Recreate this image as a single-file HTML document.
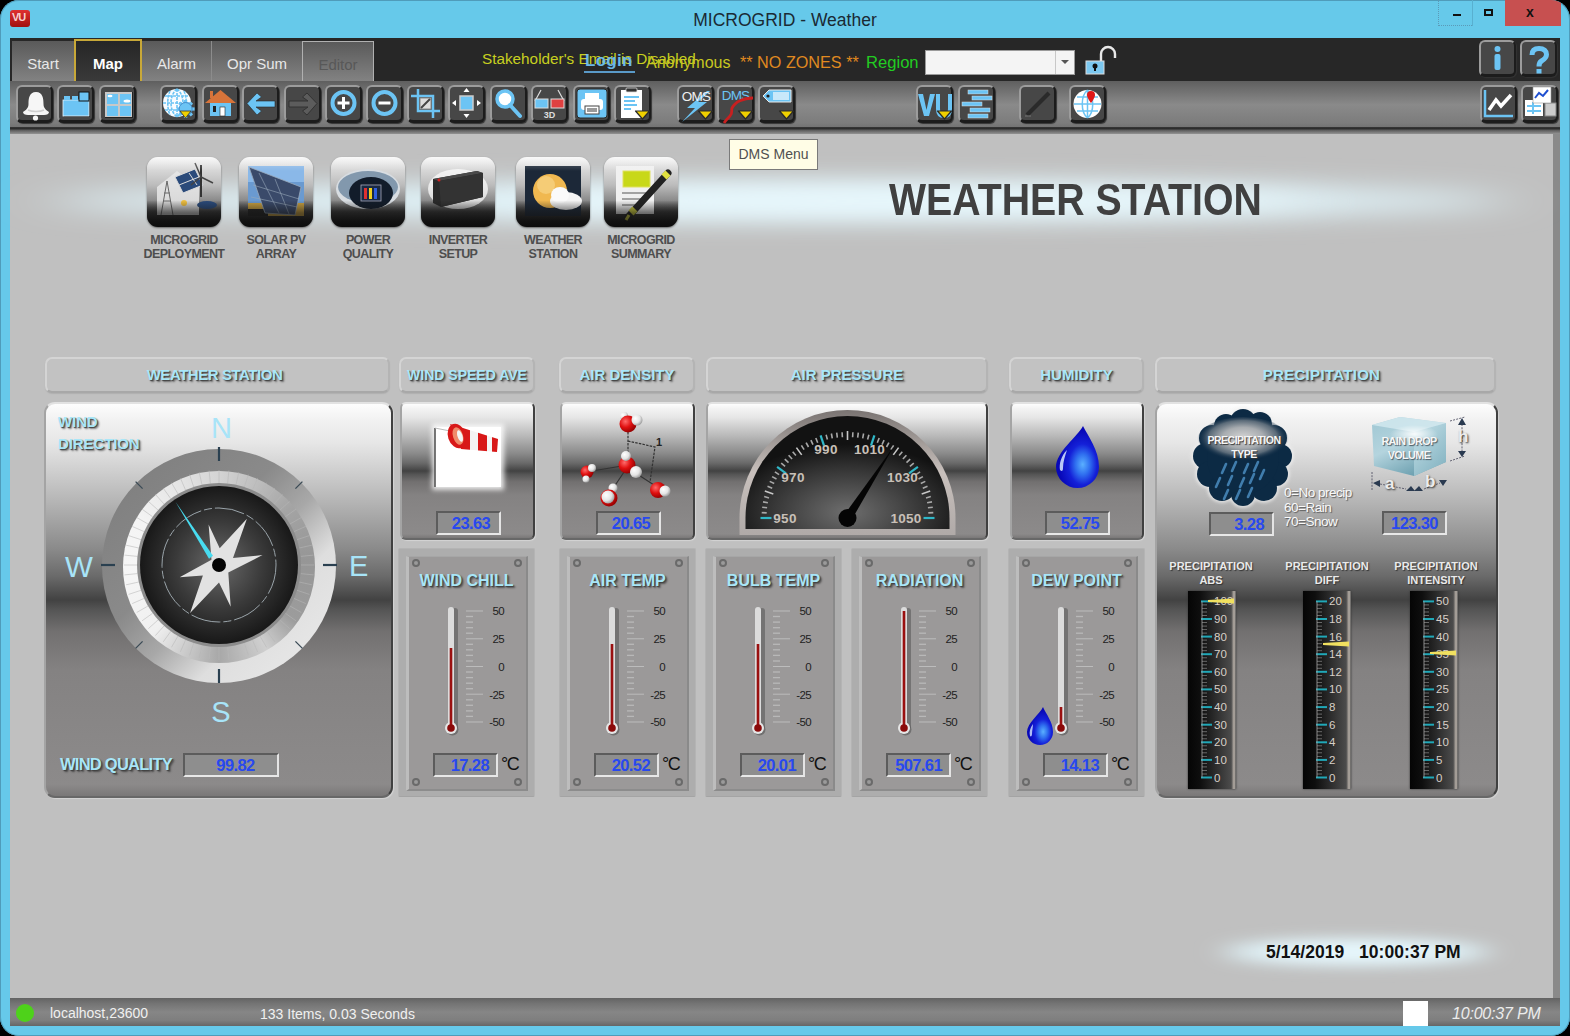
<!DOCTYPE html>
<html><head><meta charset="utf-8">
<style>
*{margin:0;padding:0;box-sizing:border-box}
html,body{width:1570px;height:1036px;overflow:hidden;background:#000;font-family:"Liberation Sans",sans-serif}
.a{position:absolute}
svg{overflow:visible}
#win{position:absolute;left:0;top:0;width:1570px;height:1036px;background:#66c9ea;border-radius:19px;overflow:hidden;box-shadow:inset 0 0 0 1px #4f9cba}
#title{left:0;top:10px;width:1570px;text-align:center;font-size:17.5px;color:#1a2a34}
.wb{top:0;height:26px}
#hdr{left:10px;top:38px;width:1550px;height:43px;background:#272727}
#tb{left:10px;top:81px;width:1550px;height:53px;background:linear-gradient(#5f5f5f,#8a8a8a 45%,#7c7c7c 79%,#747474 86%,#2a2a2a 88%,#2e2e2e 90.5%,#5a5a5a 92.5%,#939393)}
#content{left:10px;top:134px;width:1543px;height:864px;background:#c0c0c0}
#rstrip{left:1553px;top:134px;width:7px;height:864px;background:#8a8a8a}
#status{left:10px;top:998px;width:1550px;height:28px;background:linear-gradient(#636363,#747474 20%,#868686 50%,#7e7e7e 80%,#666)}
.tab{top:41px;height:40px;color:#e8e8e8;font-size:15px;text-align:center;line-height:45px;background:linear-gradient(#5a5a5a,#828282);}
.tbtn{border-radius:6px;background:#474747;border-top:2px solid #9c9c9c;border-left:2px solid #9c9c9c;border-right:2px solid #1c1c1c;border-bottom:3px solid #1c1c1c;box-shadow:1px 1px 1px #333}

.ph{border-radius:7px;background:#c2c2c2;border:2px solid #d4d4d4;border-right-color:#b4b4b4;border-bottom-color:#a8a8a8;box-shadow:0 1px 1px #b0b0b0}
.lbl{color:#a8e6f8;font-weight:bold;text-shadow:1px 1px 1px #404040, 2px 2px 2px rgba(0,0,0,.45);white-space:nowrap}
.mb{border-radius:6px;background:linear-gradient(#fdfdfd 0%,#f2f2f2 4%,#e6e6e6 10%,#b8b8b8 24%,#8a8a8a 37%,#6a6a6a 44%,#424242 50%,#555 52.5%,#727070 58%,#848282 68%,#8a8888 88%,#8c8a8a 97%,#7a7878 100%);border:2px solid #e2e2e2;border-left-color:#a4a4a4;border-bottom-color:#686868;border-right-color:#404040;box-shadow:1px 1px 1px #d4d4d4}
.vb{background:#8e8e8e;border:2px solid #5c5c5c;border-right-color:#e4e4e4;border-bottom-color:#e8e8e8;color:#2848f0;font-size:16.5px;letter-spacing:-0.6px;font-weight:bold;text-align:center;line-height:20px}
.tp{background:#adadad;border-radius:2px;border:1px solid #b4b4b4;border-bottom-color:#a4a4a4}
.tpi{background:#9b9999;border-left:3px solid #bdbdbd;border-top:1px solid #a6a6a6;border-right:2px solid #8a8a8a;border-bottom:2px solid #8c8c8c}
.scr{width:8px;height:8px;border-radius:50%;background:#9a9a9a;border:2px solid #6a6a6a}
.deg{color:#111;font-size:18px;letter-spacing:-1.5px}

</style></head><body>
<div id="win">
  <div class="a" id="tb"></div>
  <div class="a" id="content"></div>
  <div class="a" id="rstrip"></div>
  <div class="a" id="status"></div>
  <!-- title bar -->
  <div class="a" style="left:10px;top:10px;width:20px;height:17px;border-radius:3px;background:linear-gradient(#e03030,#a01010);"></div>
  <div class="a" style="left:12px;top:11px;font-size:11px;font-weight:bold;color:#f8d0d0;letter-spacing:-1px">VU</div>
  <div class="a" id="title">MICROGRID - Weather</div>
  <div class="a wb" style="left:1438px;width:34px;border-left:1px dotted #5a9ab8;border-bottom:1px dotted #5a9ab8"></div>
  <div class="a wb" style="left:1472px;width:34px;border-left:1px solid #58b0d0"></div>
  <div class="a" style="left:1453px;top:14px;width:8px;height:2px;background:#111"></div>
  <div class="a" style="left:1484px;top:9px;width:9px;height:7px;border:2px solid #111"></div>
  <div class="a wb" style="left:1505px;width:56px;background:#c75050"></div>
  <div class="a" style="left:1526px;top:4px;font-size:14px;color:#111;font-weight:bold">x</div>
  <!-- header -->
  <div class="a" id="hdr"></div>
  <div class="a tab" style="left:12px;width:62px">Start</div>
  <div class="a tab" style="left:74px;width:68px;background:#2e2e2e;border:2px solid #c8a838;border-bottom:none;top:39px;height:42px;line-height:46px;font-weight:bold;color:#fff;background:linear-gradient(#262626,#3a3a3a)">Map</div>
  <div class="a tab" style="left:142px;width:69px">Alarm</div>
  <div class="a tab" style="left:211px;width:91px;border-left:1px solid #8c8c8c">Opr Sum</div>
  <div class="a tab" style="left:302px;width:72px;border:1px solid #b0b0b0;border-bottom:none;color:#585858">Editor</div>
  <div class="a" style="left:482px;top:50px;font-size:15.3px;color:#c8d020;white-space:nowrap">Stakeholder's Email is Disabled</div>
  <div class="a" style="left:585px;top:51px;font-size:17px;font-weight:bold;color:#6ab8e8;white-space:nowrap;letter-spacing:0.3px">Login</div><div class="a" style="left:584px;top:71px;width:51px;height:2px;background:#5a9ac8"></div>
  <div class="a" style="left:646px;top:54px;font-size:16px;color:#c8c820;white-space:nowrap">Anonymous</div>
  <div class="a" style="left:740px;top:53px;font-size:16.2px;color:#e08a20;white-space:nowrap">** NO ZONES **</div>
  <div class="a" style="left:866px;top:53px;font-size:16.6px;color:#22cc22;white-space:nowrap">Region</div>
  <div class="a" style="left:925px;top:50px;width:150px;height:25px;background:#f4f4f4;border:1px solid #9a9a9a"></div>
  <div class="a" style="left:1055px;top:51px;width:1px;height:23px;background:#c8c8c8"></div>
  <div class="a" style="left:1061px;top:60px;width:0;height:0;border-left:4px solid transparent;border-right:4px solid transparent;border-top:4px solid #555"></div>
  <svg class="a" style="left:1084px;top:44px" width="34" height="32" viewBox="0 0 34 32">
    <path d="M17 18 V10 a7 7 0 0 1 14 0 V14" fill="none" stroke="#e8e8e8" stroke-width="2.4"/>
    <rect x="2" y="17" width="18" height="13" fill="#7cc8f0" stroke="#ddd" stroke-width="1"/>
    <circle cx="11" cy="22" r="2.5" fill="#111"/><rect x="10" y="22" width="2" height="5" fill="#111"/>
  </svg>
<div class="a tbtn" style="left:16px;top:85px;width:37px;height:38px"><svg width="37" height="38" viewBox="0 0 37 38" style="position:absolute;left:-2px;top:-2px"><path d="M20 7 C13 7 12.5 14 12.5 19 C12.5 23 10 25 7 27 C7 29 9 30 12 30 L28 30 C31 30 33 29 33 27 C30 25 27.5 23 27.5 19 C27.5 14 27 7 20 7 Z" fill="#f6f6f6"/><path d="M12 25 C16 27 24 27 28 25" stroke="#d0d0d0" stroke-width="1.5" fill="none"/><circle cx="19.5" cy="33" r="2.6" fill="#f6f6f6"/></svg></div>
<div class="a tbtn" style="left:57px;top:85px;width:37px;height:38px"><svg width="37" height="38" viewBox="0 0 37 38" style="position:absolute;left:-2px;top:-2px"><rect x="7" y="16" width="26" height="16" fill="#111" opacity=".9"/><rect x="6" y="15" width="26" height="16" fill="#6cc4f4" stroke="#e8f4fc" stroke-width=".8"/><rect x="22" y="7" width="10" height="9" fill="#6cc4f4" stroke="#111" stroke-width="1"/><rect x="7" y="11" width="6" height="4" fill="#6cc4f4"/><rect x="15" y="11" width="6" height="4" fill="#6cc4f4"/></svg></div>
<div class="a tbtn" style="left:99px;top:85px;width:37px;height:38px"><svg width="37" height="38" viewBox="0 0 37 38" style="position:absolute;left:-2px;top:-2px"><rect x="6" y="7" width="28" height="26" fill="#222"/><rect x="6" y="7" width="27" height="25" fill="#c8c8c8"/><rect x="8" y="9" width="11" height="10" fill="#6cc4f4"/><rect x="21" y="9" width="11" height="10" fill="#6cc4f4"/><rect x="8" y="21" width="11" height="10" fill="#6cc4f4"/><rect x="21" y="21" width="11" height="10" fill="#6cc4f4"/><ellipse cx="11" cy="11" rx="2.5" ry="1.3" fill="#fff"/><ellipse cx="28" cy="16" rx="3.5" ry="1.6" fill="#fff"/></svg></div>
<div class="a tbtn" style="left:160px;top:85px;width:37px;height:38px"><svg width="37" height="38" viewBox="0 0 37 38" style="position:absolute;left:-2px;top:-2px"><circle cx="17" cy="18" r="14" fill="#f8fbfe"/><path d="M3 18h28M17 4v28M5 11h24M5 25h24M17 4c-8 6-8 22 0 28M17 4c8 6 8 22 0 28M10 6c-3 7-3 17 0 24M24 6c3 7 3 17 0 24" stroke="#6cc4f4" stroke-width="1.6" fill="none" stroke-dasharray="3 1"/><rect x="24" y="15" width="3.2" height="4" fill="#6cc4f4" transform="rotate(0 25.6 24)"/><rect x="24" y="15" width="3.2" height="4" fill="#6cc4f4" transform="rotate(45 25.6 24)"/><rect x="24" y="15" width="3.2" height="4" fill="#6cc4f4" transform="rotate(90 25.6 24)"/><rect x="24" y="15" width="3.2" height="4" fill="#6cc4f4" transform="rotate(135 25.6 24)"/><rect x="24" y="15" width="3.2" height="4" fill="#6cc4f4" transform="rotate(180 25.6 24)"/><rect x="24" y="15" width="3.2" height="4" fill="#6cc4f4" transform="rotate(225 25.6 24)"/><rect x="24" y="15" width="3.2" height="4" fill="#6cc4f4" transform="rotate(270 25.6 24)"/><rect x="24" y="15" width="3.2" height="4" fill="#6cc4f4" transform="rotate(315 25.6 24)"/><circle cx="25.6" cy="24" r="6.5" fill="#6cc4f4" stroke="#3a80c0" stroke-width=".8"/><path d="M20 26h11l-5.5 7z" fill="#f0d000" stroke="#333" stroke-width=".8"/></svg></div>
<div class="a tbtn" style="left:202px;top:85px;width:37px;height:38px"><svg width="37" height="38" viewBox="0 0 37 38" style="position:absolute;left:-2px;top:-2px"><path d="M3 18 L18.5 5 L34 18z" fill="#d8743a"/><rect x="8" y="6" width="3" height="7" fill="#d8743a"/><rect x="8" y="18" width="21" height="13" fill="#6cc4f4"/><rect x="18" y="22" width="5" height="9" fill="#fff" stroke="#222" stroke-width=".6"/><rect x="11" y="21" width="3" height="6" fill="#222"/></svg></div>
<div class="a tbtn" style="left:242px;top:85px;width:37px;height:38px"><svg width="37" height="38" viewBox="0 0 37 38" style="position:absolute;left:-2px;top:-2px"><path d="M5 18.5 L15 8 L19.5 12 L14 16 L33 16 L33 22 L14 22 L19.5 26 L15 30 Z" fill="#6cc4f4" stroke="#2a2a2a" stroke-width=".6"/></svg></div>
<div class="a tbtn" style="left:284px;top:85px;width:37px;height:38px"><svg width="37" height="38" viewBox="0 0 37 38" style="position:absolute;left:-2px;top:-2px"><path d="M33 18.5 L23 8 L18.5 12 L24 16 L5 16 L5 22 L24 22 L18.5 26 L23 30 Z" fill="#5c5c5c" stroke="#333" stroke-width="1"/></svg></div>
<div class="a tbtn" style="left:325px;top:85px;width:37px;height:38px"><svg width="37" height="38" viewBox="0 0 37 38" style="position:absolute;left:-2px;top:-2px"><circle cx="18.5" cy="18" r="11" fill="none" stroke="#6cc4f4" stroke-width="4"/><path d="M18.5 12v12M12.5 18h12" stroke="#fff" stroke-width="3"/></svg></div>
<div class="a tbtn" style="left:366px;top:85px;width:37px;height:38px"><svg width="37" height="38" viewBox="0 0 37 38" style="position:absolute;left:-2px;top:-2px"><circle cx="18.5" cy="18" r="11" fill="none" stroke="#6cc4f4" stroke-width="4"/><path d="M12.5 18h12" stroke="#fff" stroke-width="3"/></svg></div>
<div class="a tbtn" style="left:407px;top:85px;width:37px;height:38px"><svg width="37" height="38" viewBox="0 0 37 38" style="position:absolute;left:-2px;top:-2px"><path d="M11 4v22h22M4 11h22v22" stroke="#6cc4f4" stroke-width="2.5" fill="none"/><rect x="13" y="13" width="11" height="11" fill="#ddd" stroke="#888"/><path d="M14 23 L23 14" stroke="#444" stroke-width="2"/></svg></div>
<div class="a tbtn" style="left:448px;top:85px;width:37px;height:38px"><svg width="37" height="38" viewBox="0 0 37 38" style="position:absolute;left:-2px;top:-2px"><rect x="12" y="11" width="13" height="14" fill="#6cc4f4" stroke="#ccc" stroke-width="1.5"/><path d="M18.5 3l-3 4h6z M18.5 33l-3-4h6z M4 18l4-3v6z M33 18l-4-3v6z" fill="#fff"/></svg></div>
<div class="a tbtn" style="left:490px;top:85px;width:37px;height:38px"><svg width="37" height="38" viewBox="0 0 37 38" style="position:absolute;left:-2px;top:-2px"><circle cx="15" cy="14" r="8" fill="#fff" stroke="#6cc4f4" stroke-width="3.5"/><path d="M20 20 L30 31" stroke="#6cc4f4" stroke-width="4" stroke-linecap="round"/></svg></div>
<div class="a tbtn" style="left:531px;top:85px;width:37px;height:38px"><svg width="37" height="38" viewBox="0 0 37 38" style="position:absolute;left:-2px;top:-2px"><path d="M4 16 L10 5 M33 16 L27 5" stroke="#ddd" stroke-width="1.2"/><rect x="4" y="14" width="13" height="9" fill="#6cc4f4" stroke="#ddd"/><rect x="20" y="14" width="13" height="9" fill="#e04040" stroke="#ddd"/><text x="18.5" y="33" font-size="9" font-weight="bold" fill="#ddd" text-anchor="middle" font-family="Liberation Sans">3D</text></svg></div>
<div class="a tbtn" style="left:573px;top:85px;width:37px;height:38px"><svg width="37" height="38" viewBox="0 0 37 38" style="position:absolute;left:-2px;top:-2px"><rect x="4" y="4" width="30" height="29" rx="3" fill="#6cc4f4" stroke="#2a2a2a" stroke-width="1"/><rect x="8" y="14" width="22" height="11" rx="3" fill="#fff"/><rect x="12" y="8" width="14" height="6" fill="#fff"/><rect x="12" y="21" width="14" height="8" fill="#fff" stroke="#444" stroke-width="1"/><rect x="14" y="23" width="10" height="4" fill="#999"/></svg></div>
<div class="a tbtn" style="left:614px;top:85px;width:37px;height:38px"><svg width="37" height="38" viewBox="0 0 37 38" style="position:absolute;left:-2px;top:-2px"><rect x="7" y="5" width="21" height="28" fill="#fff"/><rect x="12" y="3" width="11" height="4" rx="1" fill="#333" stroke="#ddd" stroke-width=".8"/><path d="M10 12h15M10 16h11M10 20h13M10 24h7" stroke="#6cc4f4" stroke-width="2"/><path d="M21.5 26 h14 l-7 8 z" fill="#f0d000" stroke="#2a2a2a" stroke-width="1.2" stroke-linejoin="round"/></svg></div>
<div class="a tbtn" style="left:677px;top:85px;width:37px;height:38px"><svg width="37" height="38" viewBox="0 0 37 38" style="position:absolute;left:-2px;top:-2px"><path d="M30 6 L10 23 L18 23 L5 37 L30 17 L21 17 L33 6z" fill="#6cc4f4"/><text x="19" y="16" font-size="13.5" fill="#f0f0f0" text-anchor="middle" font-family="Liberation Sans" letter-spacing="-.8">OMS</text><path d="M21.5 26 h14 l-7 8 z" fill="#f0d000" stroke="#2a2a2a" stroke-width="1.2" stroke-linejoin="round"/></svg></div>
<div class="a tbtn" style="left:717px;top:85px;width:37px;height:38px"><svg width="37" height="38" viewBox="0 0 37 38" style="position:absolute;left:-2px;top:-2px"><text x="18.5" y="15" font-size="13.5" fill="#6cc4f4" text-anchor="middle" font-family="Liberation Sans" letter-spacing="-.8">DMS</text><path d="M36 13 C26 13 18 17 15 23 C14 26 16 28 13 31 C11 33 9 35 7 38" stroke="#c82020" stroke-width="2.8" fill="none"/><path d="M21.5 26 h14 l-7 8 z" fill="#f0d000" stroke="#2a2a2a" stroke-width="1.2" stroke-linejoin="round"/></svg></div>
<div class="a tbtn" style="left:758px;top:85px;width:37px;height:38px"><svg width="37" height="38" viewBox="0 0 37 38" style="position:absolute;left:-2px;top:-2px"><path d="M5 11 l6-6 h22 v12 h-22z" fill="#6cc4f4" stroke="#eaeaea" stroke-width="1"/><rect x="15" y="7" width="16" height="8" fill="#c8e8fa"/><circle cx="10" cy="11" r="1.6" fill="#222"/><path d="M21.5 26 h14 l-7 8 z" fill="#f0d000" stroke="#2a2a2a" stroke-width="1.2" stroke-linejoin="round"/></svg></div>
<div class="a tbtn" style="left:916px;top:85px;width:37px;height:38px"><svg width="37" height="38" viewBox="0 0 37 38" style="position:absolute;left:-2px;top:-2px"><path d="M2 9 H7 L10.5 25 L14 9 H19 L13 31 H8 Z" fill="#6cc4f4"/><path d="M22 9 V24 C22 29.5 24.5 31 28 31 C31.5 31 34 29.5 34 24 V9" stroke="#6cc4f4" stroke-width="4" fill="none"/><path d="M21.5 26 h14 l-7 8 z" fill="#f0d000" stroke="#2a2a2a" stroke-width="1.2" stroke-linejoin="round"/></svg></div>
<div class="a tbtn" style="left:958px;top:85px;width:37px;height:38px"><svg width="37" height="38" viewBox="0 0 37 38" style="position:absolute;left:-2px;top:-2px"><rect x="10" y="5" width="20" height="4" fill="#6cc4f4" stroke="#ddd" stroke-width=".5"/><rect x="14" y="11" width="20" height="4" fill="#6cc4f4" stroke="#ddd" stroke-width=".5"/><rect x="4" y="17" width="20" height="4" fill="#6cc4f4" stroke="#ddd" stroke-width=".5"/><rect x="12" y="23" width="20" height="4" fill="#6cc4f4" stroke="#ddd" stroke-width=".5"/><rect x="10" y="29" width="20" height="4" fill="#6cc4f4" stroke="#ddd" stroke-width=".5"/></svg></div>
<div class="a tbtn" style="left:1019px;top:85px;width:37px;height:38px"><svg width="37" height="38" viewBox="0 0 37 38" style="position:absolute;left:-2px;top:-2px"><path d="M8 30 L30 8" stroke="#2a2a2a" stroke-width="4"/><path d="M6 31h6" stroke="#777" stroke-width="1"/></svg></div>
<div class="a tbtn" style="left:1069px;top:85px;width:37px;height:38px"><svg width="37" height="38" viewBox="0 0 37 38" style="position:absolute;left:-2px;top:-2px"><circle cx="18.5" cy="19" r="14" fill="#fff"/><path d="M5 19h27M18.5 5v28M8 12h21M8 26h21M18.5 5c-7 6-7 22 0 28M18.5 5c7 6 7 22 0 28" stroke="#6cc4f4" stroke-width="1.5" fill="none"/><path d="M22 6 a4 4 0 0 1 4 4 c0 3 -4 8 -4 8 c0 0 -4 -5 -4 -8 a4 4 0 0 1 4 -4z" fill="#e01818"/></svg></div>
<div class="a tbtn" style="left:1480px;top:85px;width:37px;height:38px"><svg width="37" height="38" viewBox="0 0 37 38" style="position:absolute;left:-2px;top:-2px"><path d="M5 5 V31 H33" stroke="#6cc4f4" stroke-width="2.5" fill="none"/><path d="M9 25 L16 15 L21 21 L31 10" stroke="#fff" stroke-width="3.5" fill="none"/></svg></div>
<div class="a tbtn" style="left:1521px;top:85px;width:37px;height:38px"><svg width="37" height="38" viewBox="0 0 37 38" style="position:absolute;left:-2px;top:-2px"><rect x="4" y="15" width="18" height="16" fill="#fff"/><path d="M6 21h14M6 26h14M12 17v12" stroke="#6cc4f4" stroke-width="2"/><rect x="24" y="18" width="11" height="13" fill="#ccc" stroke="#888"/><rect x="12" y="2" width="18" height="16" fill="#fff" stroke="#999" stroke-width=".6"/><path d="M14 13 L18 8 L22 11 L27 5" stroke="#2050d0" stroke-width="2" fill="none"/></svg></div>
<div class="a tbtn" style="left:1479px;top:40px;width:37px;height:37px"><svg width="37" height="37" style="position:absolute;left:-2px;top:-2px"><circle cx="18.5" cy="9" r="3" fill="#6cc4f4"/><rect x="15.5" y="14" width="6" height="16" rx="2" fill="#6cc4f4"/></svg></div>
<div class="a tbtn" style="left:1520px;top:40px;width:37px;height:37px"><svg width="37" height="37" style="position:absolute;left:-2px;top:-2px"><path transform="translate(-2 0)" d="M14 15 C14 10 17 8.5 21 8.5 C26 8.5 28.5 11 28.5 14.5 C28.5 18 26 19.5 23.5 21 C21.5 22.2 21 23.5 21 26.5" stroke="#6cc4f4" stroke-width="5" fill="none" stroke-linecap="butt"/><rect x="16.5" y="29" width="5" height="4.5" fill="#6cc4f4"/></svg></div>
<svg class="a" style="left:0;top:130px" width="1560" height="150"><defs><filter id="gb" x="-20%" y="-200%" width="140%" height="500%"><feGaussianBlur stdDeviation="30 13"/></filter></defs><ellipse cx="780" cy="71" rx="730" ry="18" fill="#e2f6fc" filter="url(#gb)"/><ellipse cx="900" cy="71" rx="420" ry="12" fill="#eaf9fe" filter="url(#gb)"/></svg>
<div class="a" style="left:147px;top:157px;width:74px;height:70px;border-radius:11px;background:linear-gradient(#f6f6f6,#e0e0e0 12%,#bcbcbc 40%,#8a8a8a 62%,#3a3a3a 78%,#1a1a1a 92%,#141414);box-shadow:0 1px 2px #666"></div>
<svg class="a" style="left:147px;top:157px" width="74" height="70"><path d="M10 30 L30 14 L52 30 L52 58 L10 58Z" fill="#e8e8e8" opacity=".85"/><path d="M28 20 L48 12 L56 28 L36 36Z" fill="#2a4a7a" stroke="#ddd" stroke-width="1"/><path d="M42 16 L50 28 M32 28 L52 20" stroke="#ddd" stroke-width="1"/><line x1="54" y1="8" x2="54" y2="40" stroke="#333" stroke-width="2"/><path d="M54 20 L48 6 M54 20 L66 26 M54 20 L44 28" stroke="#444" stroke-width="1.5"/><path d="M14 58 L20 24 L26 58 M16 44 L24 44 M17 36 L23 36" stroke="#666" stroke-width="1" fill="none"/><ellipse cx="60" cy="48" rx="10" ry="4" fill="#2a4a7a"/><circle cx="37" cy="46" r="3" fill="#f0c040"/></svg>
<div class="a" style="left:147px;top:157px;width:74px;height:70px;border-radius:11px;background:linear-gradient(rgba(255,255,255,.35),rgba(255,255,255,0) 20%,rgba(20,20,20,0) 62%,rgba(20,20,20,.6) 80%,rgba(10,10,10,.75));"></div>
<div class="a" style="left:127px;top:234px;width:114px;text-align:center;font-size:12.5px;line-height:13.5px;font-weight:bold;color:#4e4e4e;letter-spacing:-0.6px">MICROGRID<br>DEPLOYMENT</div>
<div class="a" style="left:239px;top:157px;width:74px;height:70px;border-radius:11px;background:linear-gradient(#f6f6f6,#e0e0e0 12%,#bcbcbc 40%,#8a8a8a 62%,#3a3a3a 78%,#1a1a1a 92%,#141414);box-shadow:0 1px 2px #666"></div>
<svg class="a" style="left:239px;top:157px" width="74" height="70"><rect x="9" y="9" width="56" height="50" fill="#6a9ad0"/><rect x="9" y="9" width="56" height="16" fill="#8ab8e8"/><rect x="9" y="46" width="56" height="13" fill="#c8a040"/><rect x="9" y="52" width="20" height="7" fill="#222"/><path d="M10 10 L62 30 L56 58 L26 56 Z" fill="#3a4a6a" stroke="#9ab" stroke-width=".8"/><path d="M20 16 L40 56 M36 22 L50 57 M14 28 L60 42 M12 40 L58 50" stroke="#9ab" stroke-width=".6"/></svg>
<div class="a" style="left:239px;top:157px;width:74px;height:70px;border-radius:11px;background:linear-gradient(rgba(255,255,255,.35),rgba(255,255,255,0) 20%,rgba(20,20,20,0) 62%,rgba(20,20,20,.6) 80%,rgba(10,10,10,.75));"></div>
<div class="a" style="left:219px;top:234px;width:114px;text-align:center;font-size:12.5px;line-height:13.5px;font-weight:bold;color:#4e4e4e;letter-spacing:-0.6px">SOLAR PV<br>ARRAY</div>
<div class="a" style="left:331px;top:157px;width:74px;height:70px;border-radius:11px;background:linear-gradient(#f6f6f6,#e0e0e0 12%,#bcbcbc 40%,#8a8a8a 62%,#3a3a3a 78%,#1a1a1a 92%,#141414);box-shadow:0 1px 2px #666"></div>
<svg class="a" style="left:331px;top:157px" width="74" height="70"><ellipse cx="37" cy="32" rx="32" ry="20" fill="#d8dde2"/><ellipse cx="37" cy="30" rx="30" ry="16" fill="#4a6a8a" opacity=".6"/><ellipse cx="40" cy="36" rx="22" ry="16" fill="#121c2a"/><rect x="30" y="28" width="20" height="16" fill="#1a2a44" stroke="#aab" stroke-width=".8"/><rect x="33" y="31" width="3" height="11" fill="#e03030"/><rect x="38" y="31" width="3" height="11" fill="#f0d020"/><rect x="43" y="31" width="3" height="11" fill="#3060e0"/></svg>
<div class="a" style="left:331px;top:157px;width:74px;height:70px;border-radius:11px;background:linear-gradient(rgba(255,255,255,.35),rgba(255,255,255,0) 20%,rgba(20,20,20,0) 62%,rgba(20,20,20,.6) 80%,rgba(10,10,10,.75));"></div>
<div class="a" style="left:311px;top:234px;width:114px;text-align:center;font-size:12.5px;line-height:13.5px;font-weight:bold;color:#4e4e4e;letter-spacing:-0.6px">POWER<br>QUALITY</div>
<div class="a" style="left:421px;top:157px;width:74px;height:70px;border-radius:11px;background:linear-gradient(#f6f6f6,#e0e0e0 12%,#bcbcbc 40%,#8a8a8a 62%,#3a3a3a 78%,#1a1a1a 92%,#141414);box-shadow:0 1px 2px #666"></div>
<svg class="a" style="left:421px;top:157px" width="74" height="70"><ellipse cx="37" cy="32" rx="30" ry="20" fill="#fff" opacity=".7"/><path d="M12 22 L56 14 L62 16 L62 40 L20 50 L12 46Z" fill="#2a2a2a"/><path d="M12 22 L56 14 L62 16 L18 24Z" fill="#4a4a4a"/><path d="M18 24 L62 16 L62 40 L20 50Z" fill="#333"/><circle cx="18" cy="23" r="1.5" fill="#d02020"/></svg>
<div class="a" style="left:421px;top:157px;width:74px;height:70px;border-radius:11px;background:linear-gradient(rgba(255,255,255,.35),rgba(255,255,255,0) 20%,rgba(20,20,20,0) 62%,rgba(20,20,20,.6) 80%,rgba(10,10,10,.75));"></div>
<div class="a" style="left:401px;top:234px;width:114px;text-align:center;font-size:12.5px;line-height:13.5px;font-weight:bold;color:#4e4e4e;letter-spacing:-0.6px">INVERTER<br>SETUP</div>
<div class="a" style="left:516px;top:157px;width:74px;height:70px;border-radius:11px;background:linear-gradient(#f6f6f6,#e0e0e0 12%,#bcbcbc 40%,#8a8a8a 62%,#3a3a3a 78%,#1a1a1a 92%,#141414);box-shadow:0 1px 2px #666"></div>
<svg class="a" style="left:516px;top:157px" width="74" height="70"><rect x="9" y="9" width="56" height="50" fill="#1c2838"/><circle cx="34" cy="34" r="17" fill="#f0b850"/><circle cx="30" cy="28" r="9" fill="#f8d890" opacity=".6"/><ellipse cx="50" cy="44" rx="16" ry="9" fill="#f4f4f4"/><ellipse cx="44" cy="38" rx="9" ry="8" fill="#fafafa"/></svg>
<div class="a" style="left:516px;top:157px;width:74px;height:70px;border-radius:11px;background:linear-gradient(rgba(255,255,255,.35),rgba(255,255,255,0) 20%,rgba(20,20,20,0) 62%,rgba(20,20,20,.6) 80%,rgba(10,10,10,.75));"></div>
<div class="a" style="left:496px;top:234px;width:114px;text-align:center;font-size:12.5px;line-height:13.5px;font-weight:bold;color:#4e4e4e;letter-spacing:-0.6px">WEATHER<br>STATION</div>
<div class="a" style="left:604px;top:157px;width:74px;height:70px;border-radius:11px;background:linear-gradient(#f6f6f6,#e0e0e0 12%,#bcbcbc 40%,#8a8a8a 62%,#3a3a3a 78%,#1a1a1a 92%,#141414);box-shadow:0 1px 2px #666"></div>
<svg class="a" style="left:604px;top:157px" width="74" height="70"><rect x="12" y="9" width="38" height="48" fill="#f0f0f0"/><rect x="19" y="14" width="27" height="16" fill="#c8d818" stroke="#e0e060" stroke-width="1"/><path d="M18 36h26M18 42h26M18 48h20" stroke="#888" stroke-width="1.5"/><path d="M64 16 L24 60" stroke="#222" stroke-width="7" stroke-linecap="round"/><path d="M64 16 L60 20" stroke="#e0e040" stroke-width="7"/><path d="M31 52 L27 56" stroke="#d8d840" stroke-width="7"/><path d="M25 58 L22 63" stroke="#e0e040" stroke-width="3"/></svg>
<div class="a" style="left:604px;top:157px;width:74px;height:70px;border-radius:11px;background:linear-gradient(rgba(255,255,255,.35),rgba(255,255,255,0) 20%,rgba(20,20,20,0) 62%,rgba(20,20,20,.6) 80%,rgba(10,10,10,.75));"></div>
<div class="a" style="left:584px;top:234px;width:114px;text-align:center;font-size:12.5px;line-height:13.5px;font-weight:bold;color:#4e4e4e;letter-spacing:-0.6px">MICROGRID<br>SUMMARY</div>
<div class="a" id="wtitle" style="left:889px;top:174.5px;font-size:44.5px;line-height:50px;font-weight:bold;color:#404040;white-space:nowrap;transform-origin:0 0;transform:scaleX(0.882)">WEATHER STATION</div>
<div class="a" style="left:729px;top:139px;width:89px;height:31px;background:#fffde6;border:1px solid #7a7a7a;font-size:14px;color:#505050;line-height:29px;text-align:center">DMS Menu</div>
<div class="a ph" style="left:45px;top:357px;width:345px;height:36px"></div><div class="a lbl" style="left:42px;top:357px;width:345px;height:36px;line-height:36px;text-align:center;font-size:15px"><span style="letter-spacing:-0.45px">WEATHER STATION</span></div>
<div class="a ph" style="left:399px;top:357px;width:136px;height:36px"></div><div class="a lbl" style="left:399px;top:357px;width:136px;height:36px;line-height:36px;text-align:center;font-size:14px">WIND SPEED AVE</div>
<div class="a ph" style="left:559px;top:357px;width:136px;height:36px"></div><div class="a lbl" style="left:559px;top:357px;width:136px;height:36px;line-height:36px;text-align:center;font-size:15px">AIR DENSITY</div>
<div class="a ph" style="left:706px;top:357px;width:282px;height:36px"></div><div class="a lbl" style="left:706px;top:357px;width:282px;height:36px;line-height:36px;text-align:center;font-size:15px">AIR PRESSURE</div>
<div class="a ph" style="left:1009px;top:357px;width:135px;height:36px"></div><div class="a lbl" style="left:1009px;top:357px;width:135px;height:36px;line-height:36px;text-align:center;font-size:15px">HUMIDITY</div>
<div class="a ph" style="left:1155px;top:357px;width:341px;height:36px"></div><div class="a lbl" style="left:1151px;top:357px;width:341px;height:36px;line-height:36px;text-align:center;font-size:15px"><span style="letter-spacing:0.3px">PRECIPITATION</span></div>
<div class="a mb" style="left:44px;top:402px;width:349px;height:396px;border-radius:11px"></div>
<div class="a mb" style="left:400px;top:402px;width:135px;height:138px;"></div>
<div class="a mb" style="left:560px;top:402px;width:135px;height:138px;"></div>
<div class="a mb" style="left:706px;top:402px;width:282px;height:138px;"></div>
<div class="a mb" style="left:1010px;top:402px;width:134px;height:138px;"></div>
<div class="a mb" style="left:1155px;top:402px;width:343px;height:396px;border-radius:11px"></div>
<div class="a" style="left:102px;top:449px;width:234px;height:234px;border-radius:50%;background:linear-gradient(135deg,#7c7c7c 0%,#8a8a8a 40%,#a8a8a8 55%,#dedede 70%,#ececec 100%)"></div>
<div class="a" style="left:123px;top:470.5px;width:192px;height:192px;border-radius:50%;background:conic-gradient(#d4d4d4 0deg,#bdbdbd 25deg,#a4a4a4 50deg,#969696 85deg,#9c9c9c 125deg,#cfcfcf 150deg,#a8a8a8 180deg,#c8c8c8 200deg,#f0f0f0 225deg,#f6f6f6 270deg,#f4f4f4 300deg,#e4e4e4 335deg,#d4d4d4 360deg)"></div>
<svg class="a" style="left:0;top:0" width="400" height="800"><defs><radialGradient id="cface" cx=".5" cy=".5" r=".5"><stop offset="0" stop-color="#6a6a6a"/><stop offset=".55" stop-color="#3a3a3a"/><stop offset="1" stop-color="#181818"/></radialGradient></defs><line x1="301.0" y1="565.0" x2="314.0" y2="565.0" stroke="#b8b8b8" stroke-width=".8" opacity=".7"/><line x1="300.6" y1="573.6" x2="313.5" y2="574.9" stroke="#b8b8b8" stroke-width=".8" opacity=".7"/><line x1="299.2" y1="582.0" x2="311.9" y2="584.8" stroke="#b8b8b8" stroke-width=".8" opacity=".7"/><line x1="297.0" y1="590.3" x2="309.4" y2="594.4" stroke="#b8b8b8" stroke-width=".8" opacity=".7"/><line x1="293.9" y1="598.4" x2="305.8" y2="603.6" stroke="#b8b8b8" stroke-width=".8" opacity=".7"/><line x1="290.0" y1="606.0" x2="301.3" y2="612.5" stroke="#b8b8b8" stroke-width=".8" opacity=".7"/><line x1="285.3" y1="613.2" x2="295.9" y2="620.8" stroke="#b8b8b8" stroke-width=".8" opacity=".7"/><line x1="279.9" y1="619.9" x2="289.6" y2="628.6" stroke="#b8b8b8" stroke-width=".8" opacity=".7"/><line x1="273.9" y1="625.9" x2="282.6" y2="635.6" stroke="#b8b8b8" stroke-width=".8" opacity=".7"/><line x1="267.2" y1="631.3" x2="274.8" y2="641.9" stroke="#b8b8b8" stroke-width=".8" opacity=".7"/><line x1="260.0" y1="636.0" x2="266.5" y2="647.3" stroke="#b8b8b8" stroke-width=".8" opacity=".7"/><line x1="252.4" y1="639.9" x2="257.6" y2="651.8" stroke="#b8b8b8" stroke-width=".8" opacity=".7"/><line x1="244.3" y1="643.0" x2="248.4" y2="655.4" stroke="#b8b8b8" stroke-width=".8" opacity=".7"/><line x1="236.0" y1="645.2" x2="238.8" y2="657.9" stroke="#b8b8b8" stroke-width=".8" opacity=".7"/><line x1="227.6" y1="646.6" x2="228.9" y2="659.5" stroke="#b8b8b8" stroke-width=".8" opacity=".7"/><line x1="219.0" y1="647.0" x2="219.0" y2="660.0" stroke="#b8b8b8" stroke-width=".8" opacity=".7"/><line x1="210.4" y1="646.6" x2="209.1" y2="659.5" stroke="#b8b8b8" stroke-width=".8" opacity=".7"/><line x1="202.0" y1="645.2" x2="199.2" y2="657.9" stroke="#b8b8b8" stroke-width=".8" opacity=".7"/><line x1="193.7" y1="643.0" x2="189.6" y2="655.4" stroke="#b8b8b8" stroke-width=".8" opacity=".7"/><line x1="185.6" y1="639.9" x2="180.4" y2="651.8" stroke="#b8b8b8" stroke-width=".8" opacity=".7"/><line x1="178.0" y1="636.0" x2="171.5" y2="647.3" stroke="#b8b8b8" stroke-width=".8" opacity=".7"/><line x1="170.8" y1="631.3" x2="163.2" y2="641.9" stroke="#b8b8b8" stroke-width=".8" opacity=".7"/><line x1="164.1" y1="625.9" x2="155.4" y2="635.6" stroke="#b8b8b8" stroke-width=".8" opacity=".7"/><line x1="158.1" y1="619.9" x2="148.4" y2="628.6" stroke="#b8b8b8" stroke-width=".8" opacity=".7"/><line x1="152.7" y1="613.2" x2="142.1" y2="620.8" stroke="#b8b8b8" stroke-width=".8" opacity=".7"/><line x1="148.0" y1="606.0" x2="136.7" y2="612.5" stroke="#b8b8b8" stroke-width=".8" opacity=".7"/><line x1="144.1" y1="598.4" x2="132.2" y2="603.6" stroke="#b8b8b8" stroke-width=".8" opacity=".7"/><line x1="141.0" y1="590.3" x2="128.6" y2="594.4" stroke="#b8b8b8" stroke-width=".8" opacity=".7"/><line x1="138.8" y1="582.0" x2="126.1" y2="584.8" stroke="#b8b8b8" stroke-width=".8" opacity=".7"/><line x1="137.4" y1="573.6" x2="124.5" y2="574.9" stroke="#b8b8b8" stroke-width=".8" opacity=".7"/><line x1="137.0" y1="565.0" x2="124.0" y2="565.0" stroke="#b8b8b8" stroke-width=".8" opacity=".7"/><line x1="137.4" y1="556.4" x2="124.5" y2="555.1" stroke="#b8b8b8" stroke-width=".8" opacity=".7"/><line x1="138.8" y1="548.0" x2="126.1" y2="545.2" stroke="#b8b8b8" stroke-width=".8" opacity=".7"/><line x1="141.0" y1="539.7" x2="128.6" y2="535.6" stroke="#b8b8b8" stroke-width=".8" opacity=".7"/><line x1="144.1" y1="531.6" x2="132.2" y2="526.4" stroke="#b8b8b8" stroke-width=".8" opacity=".7"/><line x1="148.0" y1="524.0" x2="136.7" y2="517.5" stroke="#b8b8b8" stroke-width=".8" opacity=".7"/><line x1="152.7" y1="516.8" x2="142.1" y2="509.2" stroke="#b8b8b8" stroke-width=".8" opacity=".7"/><line x1="158.1" y1="510.1" x2="148.4" y2="501.4" stroke="#b8b8b8" stroke-width=".8" opacity=".7"/><line x1="164.1" y1="504.1" x2="155.4" y2="494.4" stroke="#b8b8b8" stroke-width=".8" opacity=".7"/><line x1="170.8" y1="498.7" x2="163.2" y2="488.1" stroke="#b8b8b8" stroke-width=".8" opacity=".7"/><line x1="178.0" y1="494.0" x2="171.5" y2="482.7" stroke="#b8b8b8" stroke-width=".8" opacity=".7"/><line x1="185.6" y1="490.1" x2="180.4" y2="478.2" stroke="#b8b8b8" stroke-width=".8" opacity=".7"/><line x1="193.7" y1="487.0" x2="189.6" y2="474.6" stroke="#b8b8b8" stroke-width=".8" opacity=".7"/><line x1="202.0" y1="484.8" x2="199.2" y2="472.1" stroke="#b8b8b8" stroke-width=".8" opacity=".7"/><line x1="210.4" y1="483.4" x2="209.1" y2="470.5" stroke="#b8b8b8" stroke-width=".8" opacity=".7"/><line x1="219.0" y1="483.0" x2="219.0" y2="470.0" stroke="#b8b8b8" stroke-width=".8" opacity=".7"/><line x1="227.6" y1="483.4" x2="228.9" y2="470.5" stroke="#b8b8b8" stroke-width=".8" opacity=".7"/><line x1="236.0" y1="484.8" x2="238.8" y2="472.1" stroke="#b8b8b8" stroke-width=".8" opacity=".7"/><line x1="244.3" y1="487.0" x2="248.4" y2="474.6" stroke="#b8b8b8" stroke-width=".8" opacity=".7"/><line x1="252.4" y1="490.1" x2="257.6" y2="478.2" stroke="#b8b8b8" stroke-width=".8" opacity=".7"/><line x1="260.0" y1="494.0" x2="266.5" y2="482.7" stroke="#b8b8b8" stroke-width=".8" opacity=".7"/><line x1="267.2" y1="498.7" x2="274.8" y2="488.1" stroke="#b8b8b8" stroke-width=".8" opacity=".7"/><line x1="273.9" y1="504.1" x2="282.6" y2="494.4" stroke="#b8b8b8" stroke-width=".8" opacity=".7"/><line x1="279.9" y1="510.1" x2="289.6" y2="501.4" stroke="#b8b8b8" stroke-width=".8" opacity=".7"/><line x1="285.3" y1="516.8" x2="295.9" y2="509.2" stroke="#b8b8b8" stroke-width=".8" opacity=".7"/><line x1="290.0" y1="524.0" x2="301.3" y2="517.5" stroke="#b8b8b8" stroke-width=".8" opacity=".7"/><line x1="293.9" y1="531.6" x2="305.8" y2="526.4" stroke="#b8b8b8" stroke-width=".8" opacity=".7"/><line x1="297.0" y1="539.7" x2="309.4" y2="535.6" stroke="#b8b8b8" stroke-width=".8" opacity=".7"/><line x1="299.2" y1="548.0" x2="311.9" y2="545.2" stroke="#b8b8b8" stroke-width=".8" opacity=".7"/><line x1="300.6" y1="556.4" x2="313.5" y2="555.1" stroke="#b8b8b8" stroke-width=".8" opacity=".7"/><circle cx="219" cy="565" r="82" fill="#8c8c8c"/><circle cx="219" cy="565" r="79" fill="url(#cface)"/><circle cx="219" cy="565" r="57" fill="none" stroke="#9aa4aa" stroke-width="1" stroke-dasharray="30 3 8 3"/><line x1="323.0" y1="565.0" x2="337.0" y2="565.0" stroke="#2a4050" stroke-width="2.2"/><line x1="219.0" y1="669.0" x2="219.0" y2="683.0" stroke="#2a4050" stroke-width="2.2"/><line x1="115.0" y1="565.0" x2="101.0" y2="565.0" stroke="#2a4050" stroke-width="2.2"/><line x1="219.0" y1="461.0" x2="219.0" y2="447.0" stroke="#2a4050" stroke-width="2.2"/><line x1="295.4" y1="641.4" x2="302.4" y2="648.4" stroke="#3a4a55" stroke-width="1.3"/><line x1="142.6" y1="641.4" x2="135.6" y2="648.4" stroke="#3a4a55" stroke-width="1.3"/><line x1="142.6" y1="488.6" x2="135.6" y2="481.6" stroke="#3a4a55" stroke-width="1.3"/><line x1="295.4" y1="488.6" x2="302.4" y2="481.6" stroke="#3a4a55" stroke-width="1.3"/><polygon points="208.6,524.4 219.7,548.2 246.9,518.7 233.0,558.0 262.5,555.1 228.3,572.5 230.7,606.7 219.0,582.4 190.1,613.1 202.9,575.4 179.7,577.2 211.5,559.7" fill="#e2e2e2"/><polygon points="175.6,501.9 213,555.7 209,558.7" fill="#48dcf0"/><circle cx="219" cy="565" r="7" fill="#050505"/></svg>
<div class="a" style="left:207.5px;top:412px;width:28px;text-align:center;font-size:29px;color:#a8e4f8">N</div><div class="a" style="left:207px;top:696px;width:28px;text-align:center;font-size:29px;color:#a8e4f8">S</div><div class="a" style="left:65px;top:550px;font-size:29.5px;color:#a8e4f8">W</div><div class="a" style="left:349px;top:550px;font-size:29px;color:#a8e4f8">E</div>
<div class="a lbl" style="left:58px;top:411px;font-size:15px;line-height:21.5px;letter-spacing:-0.1px">WIND<br>DIRECTION</div>
<div class="a lbl" style="left:60px;top:755px;font-size:16.5px;letter-spacing:-0.75px">WIND QUALITY</div>
<div class="a vb" style="left:183px;top:753px;width:96px;height:24px;text-align:center;padding-right:0px;padding-left:9px">99.82</div>
<div class="a" style="left:435px;top:427px;width:66px;height:60px;background:#fff;box-shadow:0 0 5px 3px rgba(255,255,255,.85)"></div>
<svg class="a" style="left:0;top:0" width="700" height="550"><defs><clipPath id="sock"><path d="M450 424 L498 439 L497 452 L461 449 Z"/></clipPath></defs><line x1="435" y1="428" x2="435" y2="487" stroke="#555" stroke-width="1.6"/><path d="M435 428 L450 431" stroke="#bbb" stroke-width="1"/><g clip-path="url(#sock)"><rect x="440" y="420" width="70" height="40" fill="#f4f4f4"/><rect x="448" y="420" width="22" height="40" fill="#d81818"/><rect x="478" y="420" width="9" height="40" fill="#d81818"/><rect x="492" y="420" width="9" height="40" fill="#d81818"/></g><ellipse cx="457" cy="436" rx="9" ry="12.5" fill="#d81818" transform="rotate(-18 457 436)"/><ellipse cx="458" cy="436" rx="5" ry="9" fill="#f08a6a" transform="rotate(-18 458 436)"/><ellipse cx="460" cy="436" rx="2.5" ry="6" fill="#f4f4f4" transform="rotate(-18 460 436)"/></svg>
<div class="a vb" style="left:436px;top:511px;width:65px;height:24px;text-align:center;padding-right:0px;padding-left:5px">23.63</div>
<svg class="a" style="left:0;top:0" width="700" height="550"><defs><radialGradient id="ox" cx=".35" cy=".35" r=".7"><stop offset="0" stop-color="#ff6a6a"/><stop offset=".5" stop-color="#e01010"/><stop offset="1" stop-color="#900000"/></radialGradient><radialGradient id="hy" cx=".35" cy=".35" r=".7"><stop offset="0" stop-color="#ffffff"/><stop offset=".6" stop-color="#e4e4e4"/><stop offset="1" stop-color="#9a9a9a"/></radialGradient></defs><path d="M628 432 L628 452 M628 441 L655 447 L650 482" stroke="#333" stroke-width="1.2" stroke-dasharray="2.5 1.2" fill="none"/><path d="M622 466 L592 471 M624 472 L612 490 M634 472 L654 485" stroke="#333" stroke-width="1.2" fill="none"/><circle cx="624" cy="416" r="4" fill="url(#hy)"/><circle cx="628" cy="424" r="8.5" fill="url(#ox)"/><circle cx="637" cy="420" r="5.5" fill="url(#hy)"/><circle cx="627" cy="465" r="8.5" fill="url(#ox)"/><circle cx="626" cy="456" r="5" fill="url(#hy)"/><circle cx="636" cy="472" r="6" fill="url(#hy)"/><circle cx="587" cy="472" r="6.5" fill="url(#ox)"/><circle cx="592" cy="468" r="4" fill="url(#hy)"/><circle cx="586" cy="479" r="3.5" fill="url(#hy)"/><circle cx="613" cy="488" r="4.5" fill="url(#hy)"/><circle cx="609" cy="498" r="8.5" fill="url(#ox)"/><circle cx="608" cy="497" r="6.5" fill="url(#hy)"/><circle cx="658" cy="490" r="8" fill="url(#ox)"/><circle cx="665" cy="491" r="5.5" fill="url(#hy)"/><text x="656" y="446" font-size="11" font-weight="bold" fill="#222" font-family="Liberation Sans">1</text></svg>
<div class="a vb" style="left:596px;top:511px;width:65px;height:24px;text-align:center;padding-right:0px;padding-left:5px">20.65</div>
<svg class="a" style="left:700px;top:400px" width="300" height="145" viewBox="700 400 300 145"><defs><linearGradient id="gbz" x1="0" y1="0" x2="0" y2="1"><stop offset="0" stop-color="#7a7472"/><stop offset=".5" stop-color="#c8c0bc"/><stop offset="1" stop-color="#b0aaa8"/></linearGradient><radialGradient id="gface" cx=".5" cy=".85" r=".6"><stop offset="0" stop-color="#6e6e6e"/><stop offset=".6" stop-color="#383838"/><stop offset="1" stop-color="#121212"/></radialGradient></defs><path d="M739.5,535 L739.5,518 A108,108 0 0 1 955.5,518 L955.5,535 Z" fill="url(#gbz)"/><path d="M745.5,529 L745.5,518 A102,102 0 0 1 949.5,518 L949.5,529 Z" fill="url(#gface)"/><line x1="771.5" y1="518.0" x2="760.5" y2="518.0" stroke="#30b8c8" stroke-width="2.2"/><line x1="766.7" y1="512.9" x2="761.7" y2="512.6" stroke="#a8a8a8" stroke-width="1.6"/><line x1="767.1" y1="507.8" x2="762.2" y2="507.2" stroke="#a8a8a8" stroke-width="1.6"/><line x1="767.9" y1="502.8" x2="763.0" y2="501.9" stroke="#a8a8a8" stroke-width="1.6"/><line x1="769.0" y1="497.9" x2="764.2" y2="496.6" stroke="#a8a8a8" stroke-width="1.6"/><line x1="773.3" y1="493.9" x2="764.8" y2="491.1" stroke="#c8c8c8" stroke-width="1.6"/><line x1="772.2" y1="488.2" x2="767.5" y2="486.3" stroke="#a8a8a8" stroke-width="1.6"/><line x1="774.2" y1="483.5" x2="769.7" y2="481.4" stroke="#a8a8a8" stroke-width="1.6"/><line x1="776.5" y1="479.0" x2="772.1" y2="476.6" stroke="#a8a8a8" stroke-width="1.6"/><line x1="779.1" y1="474.6" x2="774.9" y2="471.9" stroke="#a8a8a8" stroke-width="1.6"/><line x1="786.0" y1="473.3" x2="777.1" y2="466.9" stroke="#30b8c8" stroke-width="2.2"/><line x1="785.1" y1="466.4" x2="781.2" y2="463.2" stroke="#a8a8a8" stroke-width="1.6"/><line x1="788.5" y1="462.6" x2="784.8" y2="459.1" stroke="#a8a8a8" stroke-width="1.6"/><line x1="792.1" y1="459.0" x2="788.6" y2="455.3" stroke="#a8a8a8" stroke-width="1.6"/><line x1="795.9" y1="455.6" x2="792.7" y2="451.7" stroke="#a8a8a8" stroke-width="1.6"/><line x1="801.7" y1="454.9" x2="796.4" y2="447.6" stroke="#c8c8c8" stroke-width="1.6"/><line x1="804.1" y1="449.6" x2="801.4" y2="445.4" stroke="#a8a8a8" stroke-width="1.6"/><line x1="808.5" y1="447.0" x2="806.1" y2="442.6" stroke="#a8a8a8" stroke-width="1.6"/><line x1="813.0" y1="444.7" x2="810.9" y2="440.2" stroke="#a8a8a8" stroke-width="1.6"/><line x1="817.7" y1="442.7" x2="815.8" y2="438.0" stroke="#a8a8a8" stroke-width="1.6"/><line x1="824.0" y1="445.7" x2="820.6" y2="435.3" stroke="#30b8c8" stroke-width="2.2"/><line x1="827.4" y1="439.5" x2="826.1" y2="434.7" stroke="#a8a8a8" stroke-width="1.6"/><line x1="832.3" y1="438.4" x2="831.4" y2="433.5" stroke="#a8a8a8" stroke-width="1.6"/><line x1="837.3" y1="437.6" x2="836.7" y2="432.7" stroke="#a8a8a8" stroke-width="1.6"/><line x1="842.4" y1="437.2" x2="842.1" y2="432.2" stroke="#a8a8a8" stroke-width="1.6"/><line x1="847.5" y1="440.0" x2="847.5" y2="431.0" stroke="#c8c8c8" stroke-width="1.6"/><line x1="852.6" y1="437.2" x2="852.9" y2="432.2" stroke="#a8a8a8" stroke-width="1.6"/><line x1="857.7" y1="437.6" x2="858.3" y2="432.7" stroke="#a8a8a8" stroke-width="1.6"/><line x1="862.7" y1="438.4" x2="863.6" y2="433.5" stroke="#a8a8a8" stroke-width="1.6"/><line x1="867.6" y1="439.5" x2="868.9" y2="434.7" stroke="#a8a8a8" stroke-width="1.6"/><line x1="871.0" y1="445.7" x2="874.4" y2="435.3" stroke="#30b8c8" stroke-width="2.2"/><line x1="877.3" y1="442.7" x2="879.2" y2="438.0" stroke="#a8a8a8" stroke-width="1.6"/><line x1="882.0" y1="444.7" x2="884.1" y2="440.2" stroke="#a8a8a8" stroke-width="1.6"/><line x1="886.5" y1="447.0" x2="888.9" y2="442.6" stroke="#a8a8a8" stroke-width="1.6"/><line x1="890.9" y1="449.6" x2="893.6" y2="445.4" stroke="#a8a8a8" stroke-width="1.6"/><line x1="893.3" y1="454.9" x2="898.6" y2="447.6" stroke="#c8c8c8" stroke-width="1.6"/><line x1="899.1" y1="455.6" x2="902.3" y2="451.7" stroke="#a8a8a8" stroke-width="1.6"/><line x1="902.9" y1="459.0" x2="906.4" y2="455.3" stroke="#a8a8a8" stroke-width="1.6"/><line x1="906.5" y1="462.6" x2="910.2" y2="459.1" stroke="#a8a8a8" stroke-width="1.6"/><line x1="909.9" y1="466.4" x2="913.8" y2="463.2" stroke="#a8a8a8" stroke-width="1.6"/><line x1="909.0" y1="473.3" x2="917.9" y2="466.9" stroke="#30b8c8" stroke-width="2.2"/><line x1="915.9" y1="474.6" x2="920.1" y2="471.9" stroke="#a8a8a8" stroke-width="1.6"/><line x1="918.5" y1="479.0" x2="922.9" y2="476.6" stroke="#a8a8a8" stroke-width="1.6"/><line x1="920.8" y1="483.5" x2="925.3" y2="481.4" stroke="#a8a8a8" stroke-width="1.6"/><line x1="922.8" y1="488.2" x2="927.5" y2="486.3" stroke="#a8a8a8" stroke-width="1.6"/><line x1="921.7" y1="493.9" x2="930.2" y2="491.1" stroke="#c8c8c8" stroke-width="1.6"/><line x1="926.0" y1="497.9" x2="930.8" y2="496.6" stroke="#a8a8a8" stroke-width="1.6"/><line x1="927.1" y1="502.8" x2="932.0" y2="501.9" stroke="#a8a8a8" stroke-width="1.6"/><line x1="927.9" y1="507.8" x2="932.8" y2="507.2" stroke="#a8a8a8" stroke-width="1.6"/><line x1="928.3" y1="512.9" x2="933.3" y2="512.6" stroke="#a8a8a8" stroke-width="1.6"/><line x1="923.5" y1="518.0" x2="934.5" y2="518.0" stroke="#30b8c8" stroke-width="2.2"/><text x="785" y="522.8" font-size="13.5" font-weight="bold" fill="#c8c0b8" text-anchor="middle" font-family="Liberation Sans" letter-spacing="0.3">950</text><text x="793" y="481.8" font-size="13.5" font-weight="bold" fill="#c8c0b8" text-anchor="middle" font-family="Liberation Sans" letter-spacing="0.3">970</text><text x="826" y="454.3" font-size="13.5" font-weight="bold" fill="#c8c0b8" text-anchor="middle" font-family="Liberation Sans" letter-spacing="0.3">990</text><text x="869.5" y="454.3" font-size="13.5" font-weight="bold" fill="#c8c0b8" text-anchor="middle" font-family="Liberation Sans" letter-spacing="0.3">1010</text><text x="902.5" y="481.8" font-size="13.5" font-weight="bold" fill="#c8c0b8" text-anchor="middle" font-family="Liberation Sans" letter-spacing="0.3">1030</text><text x="906" y="522.8" font-size="13.5" font-weight="bold" fill="#c8c0b8" text-anchor="middle" font-family="Liberation Sans" letter-spacing="0.3">1050</text><polygon points="851.3,520.4 893.6,446.7 843.7,515.6" fill="#050505"/><circle cx="847.5" cy="518" r="9" fill="#050505"/></svg>
<svg class="a" style="left:1050px;top:420px" width="60" height="75"><defs><radialGradient id="drop" cx=".62" cy=".62" r=".55"><stop offset="0" stop-color="#5ab0ff"/><stop offset=".3" stop-color="#3070f0"/><stop offset=".6" stop-color="#1420d8"/><stop offset="1" stop-color="#0808b8"/></radialGradient></defs><path d="M33 6 C28 16 6 32 6 47 a21.5 21 0 0 0 43 0 C49 30 38 16 33 6Z" fill="url(#drop)"/><path d="M17 30 C11 36 9 44 10 50 C12 52 13 51 13 48 C13 42 15 36 17 30Z" fill="#d8e8ff" opacity=".85"/></svg>
<div class="a vb" style="left:1045px;top:511px;width:65px;height:24px;text-align:center;padding-right:0px;padding-left:5px">52.75</div>
<div class="a tp" style="left:398px;top:548px;width:137px;height:249px"></div>
<div class="a tpi" style="left:406px;top:556px;width:122px;height:235px"></div>
<div class="a scr" style="left:412px;top:559px"></div><div class="a scr" style="left:514px;top:559px"></div><div class="a scr" style="left:412px;top:778px"></div><div class="a scr" style="left:514px;top:778px"></div><div class="a lbl" style="left:398px;top:572px;width:137px;text-align:center;font-size:16px">WIND CHILL</div>
<svg class="a" style="left:398px;top:548px" width="137" height="249"><line x1="68" x2="85" y1="63.0" y2="63.0" stroke="#bcbcbc" stroke-width="1"/><line x1="68" x2="75" y1="68.5" y2="68.5" stroke="#c0c0c0" stroke-width="1.3" opacity=".8"/><line x1="68" x2="75" y1="74.1" y2="74.1" stroke="#c0c0c0" stroke-width="1.3" opacity=".8"/><line x1="68" x2="75" y1="79.7" y2="79.7" stroke="#c0c0c0" stroke-width="1.3" opacity=".8"/><line x1="68" x2="75" y1="85.2" y2="85.2" stroke="#c0c0c0" stroke-width="1.3" opacity=".8"/><line x1="68" x2="85" y1="90.8" y2="90.8" stroke="#bcbcbc" stroke-width="1"/><line x1="68" x2="75" y1="96.3" y2="96.3" stroke="#c0c0c0" stroke-width="1.3" opacity=".8"/><line x1="68" x2="75" y1="101.8" y2="101.8" stroke="#c0c0c0" stroke-width="1.3" opacity=".8"/><line x1="68" x2="75" y1="107.4" y2="107.4" stroke="#c0c0c0" stroke-width="1.3" opacity=".8"/><line x1="68" x2="75" y1="113.0" y2="113.0" stroke="#c0c0c0" stroke-width="1.3" opacity=".8"/><line x1="68" x2="85" y1="118.5" y2="118.5" stroke="#bcbcbc" stroke-width="1"/><line x1="68" x2="75" y1="124.0" y2="124.0" stroke="#c0c0c0" stroke-width="1.3" opacity=".8"/><line x1="68" x2="75" y1="129.6" y2="129.6" stroke="#c0c0c0" stroke-width="1.3" opacity=".8"/><line x1="68" x2="75" y1="135.2" y2="135.2" stroke="#c0c0c0" stroke-width="1.3" opacity=".8"/><line x1="68" x2="75" y1="140.7" y2="140.7" stroke="#c0c0c0" stroke-width="1.3" opacity=".8"/><line x1="68" x2="85" y1="146.2" y2="146.2" stroke="#bcbcbc" stroke-width="1"/><line x1="68" x2="75" y1="151.8" y2="151.8" stroke="#c0c0c0" stroke-width="1.3" opacity=".8"/><line x1="68" x2="75" y1="157.3" y2="157.3" stroke="#c0c0c0" stroke-width="1.3" opacity=".8"/><line x1="68" x2="75" y1="162.9" y2="162.9" stroke="#c0c0c0" stroke-width="1.3" opacity=".8"/><line x1="68" x2="75" y1="168.4" y2="168.4" stroke="#c0c0c0" stroke-width="1.3" opacity=".8"/><line x1="68" x2="85" y1="174.0" y2="174.0" stroke="#bcbcbc" stroke-width="1"/><text x="106" y="67.3" font-size="11.5" fill="#1e1e1e" text-anchor="end" font-family="Liberation Sans" letter-spacing="-0.6">50</text><text x="106" y="95.0" font-size="11.5" fill="#1e1e1e" text-anchor="end" font-family="Liberation Sans" letter-spacing="-0.6">25</text><text x="106" y="122.8" font-size="11.5" fill="#1e1e1e" text-anchor="end" font-family="Liberation Sans" letter-spacing="-0.6">0</text><text x="106" y="150.6" font-size="11.5" fill="#1e1e1e" text-anchor="end" font-family="Liberation Sans" letter-spacing="-0.6">-25</text><text x="106" y="178.3" font-size="11.5" fill="#1e1e1e" text-anchor="end" font-family="Liberation Sans" letter-spacing="-0.6">-50</text><rect x="54" y="60" width="6" height="121" rx="3" fill="#5a5a5a" opacity=".6"/><rect x="50" y="59" width="6" height="121" rx="3" fill="#dcdcdc"/><circle cx="54.5" cy="181.5" r="6" fill="#555" opacity=".6"/><circle cx="53" cy="180" r="6" fill="#e6e6e6"/><rect x="51.7" y="100" width="2.6" height="80" fill="#9a1010"/><circle cx="53" cy="180" r="3.8" fill="#8a0a0a"/></svg>
<div class="a vb" style="left:433px;top:753px;width:65px;height:24px;text-align:right;padding-right:7px;padding-left:0px">17.28</div>
<div class="a deg" style="left:501px;top:754px">°C</div>
<div class="a tp" style="left:559px;top:548px;width:137px;height:249px"></div>
<div class="a tpi" style="left:567px;top:556px;width:122px;height:235px"></div>
<div class="a scr" style="left:573px;top:559px"></div><div class="a scr" style="left:675px;top:559px"></div><div class="a scr" style="left:573px;top:778px"></div><div class="a scr" style="left:675px;top:778px"></div><div class="a lbl" style="left:559px;top:572px;width:137px;text-align:center;font-size:16px">AIR TEMP</div>
<svg class="a" style="left:559px;top:548px" width="137" height="249"><line x1="68" x2="85" y1="63.0" y2="63.0" stroke="#bcbcbc" stroke-width="1"/><line x1="68" x2="75" y1="68.5" y2="68.5" stroke="#c0c0c0" stroke-width="1.3" opacity=".8"/><line x1="68" x2="75" y1="74.1" y2="74.1" stroke="#c0c0c0" stroke-width="1.3" opacity=".8"/><line x1="68" x2="75" y1="79.7" y2="79.7" stroke="#c0c0c0" stroke-width="1.3" opacity=".8"/><line x1="68" x2="75" y1="85.2" y2="85.2" stroke="#c0c0c0" stroke-width="1.3" opacity=".8"/><line x1="68" x2="85" y1="90.8" y2="90.8" stroke="#bcbcbc" stroke-width="1"/><line x1="68" x2="75" y1="96.3" y2="96.3" stroke="#c0c0c0" stroke-width="1.3" opacity=".8"/><line x1="68" x2="75" y1="101.8" y2="101.8" stroke="#c0c0c0" stroke-width="1.3" opacity=".8"/><line x1="68" x2="75" y1="107.4" y2="107.4" stroke="#c0c0c0" stroke-width="1.3" opacity=".8"/><line x1="68" x2="75" y1="113.0" y2="113.0" stroke="#c0c0c0" stroke-width="1.3" opacity=".8"/><line x1="68" x2="85" y1="118.5" y2="118.5" stroke="#bcbcbc" stroke-width="1"/><line x1="68" x2="75" y1="124.0" y2="124.0" stroke="#c0c0c0" stroke-width="1.3" opacity=".8"/><line x1="68" x2="75" y1="129.6" y2="129.6" stroke="#c0c0c0" stroke-width="1.3" opacity=".8"/><line x1="68" x2="75" y1="135.2" y2="135.2" stroke="#c0c0c0" stroke-width="1.3" opacity=".8"/><line x1="68" x2="75" y1="140.7" y2="140.7" stroke="#c0c0c0" stroke-width="1.3" opacity=".8"/><line x1="68" x2="85" y1="146.2" y2="146.2" stroke="#bcbcbc" stroke-width="1"/><line x1="68" x2="75" y1="151.8" y2="151.8" stroke="#c0c0c0" stroke-width="1.3" opacity=".8"/><line x1="68" x2="75" y1="157.3" y2="157.3" stroke="#c0c0c0" stroke-width="1.3" opacity=".8"/><line x1="68" x2="75" y1="162.9" y2="162.9" stroke="#c0c0c0" stroke-width="1.3" opacity=".8"/><line x1="68" x2="75" y1="168.4" y2="168.4" stroke="#c0c0c0" stroke-width="1.3" opacity=".8"/><line x1="68" x2="85" y1="174.0" y2="174.0" stroke="#bcbcbc" stroke-width="1"/><text x="106" y="67.3" font-size="11.5" fill="#1e1e1e" text-anchor="end" font-family="Liberation Sans" letter-spacing="-0.6">50</text><text x="106" y="95.0" font-size="11.5" fill="#1e1e1e" text-anchor="end" font-family="Liberation Sans" letter-spacing="-0.6">25</text><text x="106" y="122.8" font-size="11.5" fill="#1e1e1e" text-anchor="end" font-family="Liberation Sans" letter-spacing="-0.6">0</text><text x="106" y="150.6" font-size="11.5" fill="#1e1e1e" text-anchor="end" font-family="Liberation Sans" letter-spacing="-0.6">-25</text><text x="106" y="178.3" font-size="11.5" fill="#1e1e1e" text-anchor="end" font-family="Liberation Sans" letter-spacing="-0.6">-50</text><rect x="54" y="60" width="6" height="121" rx="3" fill="#5a5a5a" opacity=".6"/><rect x="50" y="59" width="6" height="121" rx="3" fill="#dcdcdc"/><circle cx="54.5" cy="181.5" r="6" fill="#555" opacity=".6"/><circle cx="53" cy="180" r="6" fill="#e6e6e6"/><rect x="51.7" y="96" width="2.6" height="84" fill="#9a1010"/><circle cx="53" cy="180" r="3.8" fill="#8a0a0a"/></svg>
<div class="a vb" style="left:594px;top:753px;width:65px;height:24px;text-align:right;padding-right:7px;padding-left:0px">20.52</div>
<div class="a deg" style="left:662px;top:754px">°C</div>
<div class="a tp" style="left:705px;top:548px;width:137px;height:249px"></div>
<div class="a tpi" style="left:713px;top:556px;width:122px;height:235px"></div>
<div class="a scr" style="left:719px;top:559px"></div><div class="a scr" style="left:821px;top:559px"></div><div class="a scr" style="left:719px;top:778px"></div><div class="a scr" style="left:821px;top:778px"></div><div class="a lbl" style="left:705px;top:572px;width:137px;text-align:center;font-size:16px">BULB TEMP</div>
<svg class="a" style="left:705px;top:548px" width="137" height="249"><line x1="68" x2="85" y1="63.0" y2="63.0" stroke="#bcbcbc" stroke-width="1"/><line x1="68" x2="75" y1="68.5" y2="68.5" stroke="#c0c0c0" stroke-width="1.3" opacity=".8"/><line x1="68" x2="75" y1="74.1" y2="74.1" stroke="#c0c0c0" stroke-width="1.3" opacity=".8"/><line x1="68" x2="75" y1="79.7" y2="79.7" stroke="#c0c0c0" stroke-width="1.3" opacity=".8"/><line x1="68" x2="75" y1="85.2" y2="85.2" stroke="#c0c0c0" stroke-width="1.3" opacity=".8"/><line x1="68" x2="85" y1="90.8" y2="90.8" stroke="#bcbcbc" stroke-width="1"/><line x1="68" x2="75" y1="96.3" y2="96.3" stroke="#c0c0c0" stroke-width="1.3" opacity=".8"/><line x1="68" x2="75" y1="101.8" y2="101.8" stroke="#c0c0c0" stroke-width="1.3" opacity=".8"/><line x1="68" x2="75" y1="107.4" y2="107.4" stroke="#c0c0c0" stroke-width="1.3" opacity=".8"/><line x1="68" x2="75" y1="113.0" y2="113.0" stroke="#c0c0c0" stroke-width="1.3" opacity=".8"/><line x1="68" x2="85" y1="118.5" y2="118.5" stroke="#bcbcbc" stroke-width="1"/><line x1="68" x2="75" y1="124.0" y2="124.0" stroke="#c0c0c0" stroke-width="1.3" opacity=".8"/><line x1="68" x2="75" y1="129.6" y2="129.6" stroke="#c0c0c0" stroke-width="1.3" opacity=".8"/><line x1="68" x2="75" y1="135.2" y2="135.2" stroke="#c0c0c0" stroke-width="1.3" opacity=".8"/><line x1="68" x2="75" y1="140.7" y2="140.7" stroke="#c0c0c0" stroke-width="1.3" opacity=".8"/><line x1="68" x2="85" y1="146.2" y2="146.2" stroke="#bcbcbc" stroke-width="1"/><line x1="68" x2="75" y1="151.8" y2="151.8" stroke="#c0c0c0" stroke-width="1.3" opacity=".8"/><line x1="68" x2="75" y1="157.3" y2="157.3" stroke="#c0c0c0" stroke-width="1.3" opacity=".8"/><line x1="68" x2="75" y1="162.9" y2="162.9" stroke="#c0c0c0" stroke-width="1.3" opacity=".8"/><line x1="68" x2="75" y1="168.4" y2="168.4" stroke="#c0c0c0" stroke-width="1.3" opacity=".8"/><line x1="68" x2="85" y1="174.0" y2="174.0" stroke="#bcbcbc" stroke-width="1"/><text x="106" y="67.3" font-size="11.5" fill="#1e1e1e" text-anchor="end" font-family="Liberation Sans" letter-spacing="-0.6">50</text><text x="106" y="95.0" font-size="11.5" fill="#1e1e1e" text-anchor="end" font-family="Liberation Sans" letter-spacing="-0.6">25</text><text x="106" y="122.8" font-size="11.5" fill="#1e1e1e" text-anchor="end" font-family="Liberation Sans" letter-spacing="-0.6">0</text><text x="106" y="150.6" font-size="11.5" fill="#1e1e1e" text-anchor="end" font-family="Liberation Sans" letter-spacing="-0.6">-25</text><text x="106" y="178.3" font-size="11.5" fill="#1e1e1e" text-anchor="end" font-family="Liberation Sans" letter-spacing="-0.6">-50</text><rect x="54" y="60" width="6" height="121" rx="3" fill="#5a5a5a" opacity=".6"/><rect x="50" y="59" width="6" height="121" rx="3" fill="#dcdcdc"/><circle cx="54.5" cy="181.5" r="6" fill="#555" opacity=".6"/><circle cx="53" cy="180" r="6" fill="#e6e6e6"/><rect x="51.7" y="96" width="2.6" height="84" fill="#9a1010"/><circle cx="53" cy="180" r="3.8" fill="#8a0a0a"/></svg>
<div class="a vb" style="left:740px;top:753px;width:65px;height:24px;text-align:right;padding-right:7px;padding-left:0px">20.01</div>
<div class="a deg" style="left:808px;top:754px">°C</div>
<div class="a tp" style="left:851px;top:548px;width:137px;height:249px"></div>
<div class="a tpi" style="left:859px;top:556px;width:122px;height:235px"></div>
<div class="a scr" style="left:865px;top:559px"></div><div class="a scr" style="left:967px;top:559px"></div><div class="a scr" style="left:865px;top:778px"></div><div class="a scr" style="left:967px;top:778px"></div><div class="a lbl" style="left:851px;top:572px;width:137px;text-align:center;font-size:16px">RADIATION</div>
<svg class="a" style="left:851px;top:548px" width="137" height="249"><line x1="68" x2="85" y1="63.0" y2="63.0" stroke="#bcbcbc" stroke-width="1"/><line x1="68" x2="75" y1="68.5" y2="68.5" stroke="#c0c0c0" stroke-width="1.3" opacity=".8"/><line x1="68" x2="75" y1="74.1" y2="74.1" stroke="#c0c0c0" stroke-width="1.3" opacity=".8"/><line x1="68" x2="75" y1="79.7" y2="79.7" stroke="#c0c0c0" stroke-width="1.3" opacity=".8"/><line x1="68" x2="75" y1="85.2" y2="85.2" stroke="#c0c0c0" stroke-width="1.3" opacity=".8"/><line x1="68" x2="85" y1="90.8" y2="90.8" stroke="#bcbcbc" stroke-width="1"/><line x1="68" x2="75" y1="96.3" y2="96.3" stroke="#c0c0c0" stroke-width="1.3" opacity=".8"/><line x1="68" x2="75" y1="101.8" y2="101.8" stroke="#c0c0c0" stroke-width="1.3" opacity=".8"/><line x1="68" x2="75" y1="107.4" y2="107.4" stroke="#c0c0c0" stroke-width="1.3" opacity=".8"/><line x1="68" x2="75" y1="113.0" y2="113.0" stroke="#c0c0c0" stroke-width="1.3" opacity=".8"/><line x1="68" x2="85" y1="118.5" y2="118.5" stroke="#bcbcbc" stroke-width="1"/><line x1="68" x2="75" y1="124.0" y2="124.0" stroke="#c0c0c0" stroke-width="1.3" opacity=".8"/><line x1="68" x2="75" y1="129.6" y2="129.6" stroke="#c0c0c0" stroke-width="1.3" opacity=".8"/><line x1="68" x2="75" y1="135.2" y2="135.2" stroke="#c0c0c0" stroke-width="1.3" opacity=".8"/><line x1="68" x2="75" y1="140.7" y2="140.7" stroke="#c0c0c0" stroke-width="1.3" opacity=".8"/><line x1="68" x2="85" y1="146.2" y2="146.2" stroke="#bcbcbc" stroke-width="1"/><line x1="68" x2="75" y1="151.8" y2="151.8" stroke="#c0c0c0" stroke-width="1.3" opacity=".8"/><line x1="68" x2="75" y1="157.3" y2="157.3" stroke="#c0c0c0" stroke-width="1.3" opacity=".8"/><line x1="68" x2="75" y1="162.9" y2="162.9" stroke="#c0c0c0" stroke-width="1.3" opacity=".8"/><line x1="68" x2="75" y1="168.4" y2="168.4" stroke="#c0c0c0" stroke-width="1.3" opacity=".8"/><line x1="68" x2="85" y1="174.0" y2="174.0" stroke="#bcbcbc" stroke-width="1"/><text x="106" y="67.3" font-size="11.5" fill="#1e1e1e" text-anchor="end" font-family="Liberation Sans" letter-spacing="-0.6">50</text><text x="106" y="95.0" font-size="11.5" fill="#1e1e1e" text-anchor="end" font-family="Liberation Sans" letter-spacing="-0.6">25</text><text x="106" y="122.8" font-size="11.5" fill="#1e1e1e" text-anchor="end" font-family="Liberation Sans" letter-spacing="-0.6">0</text><text x="106" y="150.6" font-size="11.5" fill="#1e1e1e" text-anchor="end" font-family="Liberation Sans" letter-spacing="-0.6">-25</text><text x="106" y="178.3" font-size="11.5" fill="#1e1e1e" text-anchor="end" font-family="Liberation Sans" letter-spacing="-0.6">-50</text><rect x="54" y="60" width="6" height="121" rx="3" fill="#5a5a5a" opacity=".6"/><rect x="50" y="59" width="6" height="121" rx="3" fill="#dcdcdc"/><circle cx="54.5" cy="181.5" r="6" fill="#555" opacity=".6"/><circle cx="53" cy="180" r="6" fill="#e6e6e6"/><rect x="51.7" y="63" width="2.6" height="117" fill="#9a1010"/><circle cx="53" cy="180" r="3.8" fill="#8a0a0a"/></svg>
<div class="a vb" style="left:886px;top:753px;width:65px;height:24px;text-align:right;padding-right:7px;padding-left:0px">507.61</div>
<div class="a deg" style="left:954px;top:754px">°C</div>
<div class="a tp" style="left:1008px;top:548px;width:137px;height:249px"></div>
<div class="a tpi" style="left:1016px;top:556px;width:122px;height:235px"></div>
<div class="a scr" style="left:1022px;top:559px"></div><div class="a scr" style="left:1124px;top:559px"></div><div class="a scr" style="left:1022px;top:778px"></div><div class="a scr" style="left:1124px;top:778px"></div><div class="a lbl" style="left:1008px;top:572px;width:137px;text-align:center;font-size:16px">DEW POINT</div>
<svg class="a" style="left:1008px;top:548px" width="137" height="249"><line x1="68" x2="85" y1="63.0" y2="63.0" stroke="#bcbcbc" stroke-width="1"/><line x1="68" x2="75" y1="68.5" y2="68.5" stroke="#c0c0c0" stroke-width="1.3" opacity=".8"/><line x1="68" x2="75" y1="74.1" y2="74.1" stroke="#c0c0c0" stroke-width="1.3" opacity=".8"/><line x1="68" x2="75" y1="79.7" y2="79.7" stroke="#c0c0c0" stroke-width="1.3" opacity=".8"/><line x1="68" x2="75" y1="85.2" y2="85.2" stroke="#c0c0c0" stroke-width="1.3" opacity=".8"/><line x1="68" x2="85" y1="90.8" y2="90.8" stroke="#bcbcbc" stroke-width="1"/><line x1="68" x2="75" y1="96.3" y2="96.3" stroke="#c0c0c0" stroke-width="1.3" opacity=".8"/><line x1="68" x2="75" y1="101.8" y2="101.8" stroke="#c0c0c0" stroke-width="1.3" opacity=".8"/><line x1="68" x2="75" y1="107.4" y2="107.4" stroke="#c0c0c0" stroke-width="1.3" opacity=".8"/><line x1="68" x2="75" y1="113.0" y2="113.0" stroke="#c0c0c0" stroke-width="1.3" opacity=".8"/><line x1="68" x2="85" y1="118.5" y2="118.5" stroke="#bcbcbc" stroke-width="1"/><line x1="68" x2="75" y1="124.0" y2="124.0" stroke="#c0c0c0" stroke-width="1.3" opacity=".8"/><line x1="68" x2="75" y1="129.6" y2="129.6" stroke="#c0c0c0" stroke-width="1.3" opacity=".8"/><line x1="68" x2="75" y1="135.2" y2="135.2" stroke="#c0c0c0" stroke-width="1.3" opacity=".8"/><line x1="68" x2="75" y1="140.7" y2="140.7" stroke="#c0c0c0" stroke-width="1.3" opacity=".8"/><line x1="68" x2="85" y1="146.2" y2="146.2" stroke="#bcbcbc" stroke-width="1"/><line x1="68" x2="75" y1="151.8" y2="151.8" stroke="#c0c0c0" stroke-width="1.3" opacity=".8"/><line x1="68" x2="75" y1="157.3" y2="157.3" stroke="#c0c0c0" stroke-width="1.3" opacity=".8"/><line x1="68" x2="75" y1="162.9" y2="162.9" stroke="#c0c0c0" stroke-width="1.3" opacity=".8"/><line x1="68" x2="75" y1="168.4" y2="168.4" stroke="#c0c0c0" stroke-width="1.3" opacity=".8"/><line x1="68" x2="85" y1="174.0" y2="174.0" stroke="#bcbcbc" stroke-width="1"/><text x="106" y="67.3" font-size="11.5" fill="#1e1e1e" text-anchor="end" font-family="Liberation Sans" letter-spacing="-0.6">50</text><text x="106" y="95.0" font-size="11.5" fill="#1e1e1e" text-anchor="end" font-family="Liberation Sans" letter-spacing="-0.6">25</text><text x="106" y="122.8" font-size="11.5" fill="#1e1e1e" text-anchor="end" font-family="Liberation Sans" letter-spacing="-0.6">0</text><text x="106" y="150.6" font-size="11.5" fill="#1e1e1e" text-anchor="end" font-family="Liberation Sans" letter-spacing="-0.6">-25</text><text x="106" y="178.3" font-size="11.5" fill="#1e1e1e" text-anchor="end" font-family="Liberation Sans" letter-spacing="-0.6">-50</text><rect x="54" y="60" width="6" height="121" rx="3" fill="#5a5a5a" opacity=".6"/><rect x="50" y="59" width="6" height="121" rx="3" fill="#dcdcdc"/><circle cx="54.5" cy="181.5" r="6" fill="#555" opacity=".6"/><circle cx="53" cy="180" r="6" fill="#e6e6e6"/><rect x="51.7" y="159" width="2.6" height="21" fill="#9a1010"/><circle cx="53" cy="180" r="3.8" fill="#8a0a0a"/></svg>
<div class="a vb" style="left:1043px;top:753px;width:65px;height:24px;text-align:right;padding-right:7px;padding-left:0px">14.13</div>
<div class="a deg" style="left:1111px;top:754px">°C</div>
<svg class="a" style="left:1024px;top:704px" width="34" height="44"><defs><radialGradient id="drop2" cx=".62" cy=".65" r=".55"><stop offset="0" stop-color="#5ab0ff"/><stop offset=".3" stop-color="#3070f0"/><stop offset=".6" stop-color="#1420d8"/><stop offset="1" stop-color="#0808b8"/></radialGradient></defs><path d="M19 3 C16 10 3 19 3 28 a13 13 0 0 0 26 0 C29 18 22 10 19 3Z" fill="url(#drop2)"/><path d="M9 20 C6 24 5 28 6 32 C7 33 8 32 8 30 C8 27 9 23 9 20Z" fill="#d8e8ff" opacity=".8"/></svg>
<svg class="a" style="left:1180px;top:400px" width="130" height="115"><defs><radialGradient id="cl" cx=".5" cy=".45" r=".5"><stop offset="0" stop-color="#d4d4d4"/><stop offset=".45" stop-color="#a8acb0"/><stop offset=".75" stop-color="#5a6a78"/><stop offset="1" stop-color="#0e2a44" stop-opacity="0"/></radialGradient><filter id="cglow"><feGaussianBlur stdDeviation="1.5"/></filter></defs><g filter="url(#cglow)" opacity=".7"><circle cx="63" cy="22" r="15" fill="#f0f0f0"/><circle cx="46" cy="26" r="14" fill="#f0f0f0"/><circle cx="80" cy="24" r="14" fill="#f0f0f0"/><circle cx="32" cy="38" r="15" fill="#f0f0f0"/><circle cx="94" cy="38" r="15" fill="#f0f0f0"/><circle cx="26" cy="56" r="15" fill="#f0f0f0"/><circle cx="100" cy="56" r="14" fill="#f0f0f0"/><circle cx="30" cy="74" r="15" fill="#f0f0f0"/><circle cx="96" cy="74" r="14" fill="#f0f0f0"/><circle cx="42" cy="88" r="15" fill="#f0f0f0"/><circle cx="84" cy="88" r="15" fill="#f0f0f0"/><circle cx="63" cy="94" r="14" fill="#f0f0f0"/><circle cx="63" cy="58" r="38" fill="#f0f0f0"/></g><circle cx="63" cy="22" r="13" fill="#0c2a44"/><circle cx="46" cy="26" r="12" fill="#0c2a44"/><circle cx="80" cy="24" r="12" fill="#0c2a44"/><circle cx="32" cy="38" r="13" fill="#0c2a44"/><circle cx="94" cy="38" r="13" fill="#0c2a44"/><circle cx="26" cy="56" r="13" fill="#0c2a44"/><circle cx="100" cy="56" r="12" fill="#0c2a44"/><circle cx="30" cy="74" r="13" fill="#0c2a44"/><circle cx="96" cy="74" r="12" fill="#0c2a44"/><circle cx="42" cy="88" r="13" fill="#0c2a44"/><circle cx="84" cy="88" r="13" fill="#0c2a44"/><circle cx="63" cy="94" r="12" fill="#0c2a44"/><circle cx="63" cy="58" r="36" fill="#0c2a44"/><ellipse cx="63" cy="40" rx="46" ry="23" fill="url(#cl)"/><path d="M46 64 l-4 9" stroke="#4a8cc0" stroke-width="2.6" stroke-linecap="round" opacity=".85"/><path d="M56 62 l-4 9" stroke="#4a8cc0" stroke-width="2.6" stroke-linecap="round" opacity=".85"/><path d="M68 64 l-4 9" stroke="#4a8cc0" stroke-width="2.6" stroke-linecap="round" opacity=".85"/><path d="M78 62 l-4 9" stroke="#4a8cc0" stroke-width="2.6" stroke-linecap="round" opacity=".85"/><path d="M40 78 l-4 9" stroke="#4a8cc0" stroke-width="2.6" stroke-linecap="round" opacity=".85"/><path d="M52 76 l-4 9" stroke="#4a8cc0" stroke-width="2.6" stroke-linecap="round" opacity=".85"/><path d="M64 78 l-4 9" stroke="#4a8cc0" stroke-width="2.6" stroke-linecap="round" opacity=".85"/><path d="M74 74 l-4 9" stroke="#4a8cc0" stroke-width="2.6" stroke-linecap="round" opacity=".85"/><path d="M84 70 l-4 9" stroke="#4a8cc0" stroke-width="2.6" stroke-linecap="round" opacity=".85"/><path d="M48 90 l-4 9" stroke="#4a8cc0" stroke-width="2.6" stroke-linecap="round" opacity=".85"/><path d="M60 90 l-4 9" stroke="#4a8cc0" stroke-width="2.6" stroke-linecap="round" opacity=".85"/><path d="M72 88 l-4 9" stroke="#4a8cc0" stroke-width="2.6" stroke-linecap="round" opacity=".85"/></svg>
<div class="a" style="left:1194px;top:433px;width:100px;text-align:center;font-size:10.5px;line-height:14px;font-weight:bold;color:#f6f6f6;letter-spacing:-0.5px;text-shadow:1px 1px 1px #333">PRECIPITATION<br>TYPE</div>
<div class="a vb" style="left:1209px;top:512px;width:65px;height:24px;text-align:right;padding-right:8px;padding-left:5px">3.28</div>
<div class="a" style="left:1284px;top:486px;font-size:13.5px;line-height:14.5px;color:#fafafa;text-shadow:1px 1px 1px #5a5a5a;letter-spacing:-0.5px">0=No precip<br>60=Rain<br>70=Snow</div>
<svg class="a" style="left:0;top:0" width="1500" height="550"><defs><linearGradient id="cubl" x1="0" y1="0" x2=".6" y2="1"><stop offset="0" stop-color="#9ec6d2"/><stop offset=".5" stop-color="#b4d4de"/><stop offset="1" stop-color="#6a9eae"/></linearGradient><linearGradient id="cubr" x1="0" y1="0" x2="1" y2="1"><stop offset="0" stop-color="#c4e0e8"/><stop offset="1" stop-color="#8ab8c6"/></linearGradient><radialGradient id="cubh" cx=".5" cy=".5" r=".5"><stop offset="0" stop-color="#fff" stop-opacity=".9"/><stop offset="1" stop-color="#fff" stop-opacity="0"/></radialGradient></defs><path d="M1372 425 L1400 417 L1446 423 L1446 462 L1414 476 L1374 466Z" fill="url(#cubl)"/><path d="M1414 432 L1446 423 L1446 462 L1414 476Z" fill="url(#cubr)" opacity=".8"/><path d="M1372 425 L1400 417 L1446 423 L1414 432Z" fill="#d4eaf0" opacity=".8"/><ellipse cx="1414" cy="434" rx="24" ry="9" fill="url(#cubh)"/><path d="M1450 421 L1465 417 M1450 461 L1465 456 M1462 424 L1462 452" stroke="#556" stroke-width=".9" stroke-dasharray="2 1.2"/><path d="M1458 425 L1462 418 L1466 425Z M1458 451 L1462 457 L1466 451Z" fill="#2a3a50"/><path d="M1372 472 L1372 490 M1380 484 L1406 489 M1424 489 L1440 483" stroke="#556" stroke-width=".9" stroke-dasharray="2 1.2" fill="none"/><path d="M1373 483 L1380 480 L1380 487Z M1406 491 L1411 486 L1415 491Z M1414 491 L1419 486 L1423 491Z M1439 480 L1447 480 L1443 486Z" fill="#2a3a50"/></svg>
<div class="a" style="left:1371px;top:434px;width:76px;text-align:center;font-size:10.8px;line-height:14px;font-weight:bold;color:#f6f6f6;letter-spacing:-0.6px;text-shadow:1px 1px 1px #4a5a64">RAIN DROP<br>VOLUME</div>
<div class="a" style="left:1458px;top:427px;font-size:17px;font-weight:bold;color:#ececec;text-shadow:1px 1px 2px #333">h</div><div class="a" style="left:1385px;top:474px;font-size:17px;font-weight:bold;color:#ececec;text-shadow:1px 1px 2px #333">a</div><div class="a" style="left:1425px;top:472px;font-size:17px;font-weight:bold;color:#ececec;text-shadow:1px 1px 2px #333">b</div>
<div class="a vb" style="left:1382px;top:511px;width:65px;height:24px;text-align:center;padding-right:0px;padding-left:0px">123.30</div>
<div class="a lbl" style="left:1151px;top:559px;width:120px;text-align:center;font-size:11px;line-height:14px;color:#eaeaea;text-shadow:1px 1px 1px #333">PRECIPITATION<br>ABS</div>
<div class="a" style="left:1188px;top:591px;width:48px;height:198px;background:linear-gradient(90deg,#050505,#0e0e0e 25%,#2a2a2a 55%,#4c4c4c 90%,#b8b0a8 96%,#5a5a5a);box-shadow:0 0 2px #333"></div>
<svg class="a" style="left:1188px;top:591px" width="50" height="198"><line x1="13" x2="24" y1="10.4" y2="10.4" stroke="#20a8b8" stroke-width="2"/><line x1="14" x2="19" y1="13.9" y2="13.9" stroke="#aaa" stroke-width=".8" opacity=".7"/><line x1="14" x2="19" y1="17.4" y2="17.4" stroke="#aaa" stroke-width=".8" opacity=".7"/><line x1="14" x2="19" y1="21.0" y2="21.0" stroke="#aaa" stroke-width=".8" opacity=".7"/><line x1="14" x2="19" y1="24.5" y2="24.5" stroke="#aaa" stroke-width=".8" opacity=".7"/><line x1="13" x2="24" y1="28.0" y2="28.0" stroke="#20a8b8" stroke-width="2"/><line x1="14" x2="19" y1="31.5" y2="31.5" stroke="#aaa" stroke-width=".8" opacity=".7"/><line x1="14" x2="19" y1="35.1" y2="35.1" stroke="#aaa" stroke-width=".8" opacity=".7"/><line x1="14" x2="19" y1="38.6" y2="38.6" stroke="#aaa" stroke-width=".8" opacity=".7"/><line x1="14" x2="19" y1="42.1" y2="42.1" stroke="#aaa" stroke-width=".8" opacity=".7"/><line x1="13" x2="24" y1="45.6" y2="45.6" stroke="#20a8b8" stroke-width="2"/><line x1="14" x2="19" y1="49.1" y2="49.1" stroke="#aaa" stroke-width=".8" opacity=".7"/><line x1="14" x2="19" y1="52.7" y2="52.7" stroke="#aaa" stroke-width=".8" opacity=".7"/><line x1="14" x2="19" y1="56.2" y2="56.2" stroke="#aaa" stroke-width=".8" opacity=".7"/><line x1="14" x2="19" y1="59.7" y2="59.7" stroke="#aaa" stroke-width=".8" opacity=".7"/><line x1="13" x2="24" y1="63.2" y2="63.2" stroke="#20a8b8" stroke-width="2"/><line x1="14" x2="19" y1="66.8" y2="66.8" stroke="#aaa" stroke-width=".8" opacity=".7"/><line x1="14" x2="19" y1="70.3" y2="70.3" stroke="#aaa" stroke-width=".8" opacity=".7"/><line x1="14" x2="19" y1="73.8" y2="73.8" stroke="#aaa" stroke-width=".8" opacity=".7"/><line x1="14" x2="19" y1="77.3" y2="77.3" stroke="#aaa" stroke-width=".8" opacity=".7"/><line x1="13" x2="24" y1="80.8" y2="80.8" stroke="#20a8b8" stroke-width="2"/><line x1="14" x2="19" y1="84.4" y2="84.4" stroke="#aaa" stroke-width=".8" opacity=".7"/><line x1="14" x2="19" y1="87.9" y2="87.9" stroke="#aaa" stroke-width=".8" opacity=".7"/><line x1="14" x2="19" y1="91.4" y2="91.4" stroke="#aaa" stroke-width=".8" opacity=".7"/><line x1="14" x2="19" y1="94.9" y2="94.9" stroke="#aaa" stroke-width=".8" opacity=".7"/><line x1="13" x2="24" y1="98.4" y2="98.4" stroke="#20a8b8" stroke-width="2"/><line x1="14" x2="19" y1="102.0" y2="102.0" stroke="#aaa" stroke-width=".8" opacity=".7"/><line x1="14" x2="19" y1="105.5" y2="105.5" stroke="#aaa" stroke-width=".8" opacity=".7"/><line x1="14" x2="19" y1="109.0" y2="109.0" stroke="#aaa" stroke-width=".8" opacity=".7"/><line x1="14" x2="19" y1="112.5" y2="112.5" stroke="#aaa" stroke-width=".8" opacity=".7"/><line x1="13" x2="24" y1="116.1" y2="116.1" stroke="#20a8b8" stroke-width="2"/><line x1="14" x2="19" y1="119.6" y2="119.6" stroke="#aaa" stroke-width=".8" opacity=".7"/><line x1="14" x2="19" y1="123.1" y2="123.1" stroke="#aaa" stroke-width=".8" opacity=".7"/><line x1="14" x2="19" y1="126.6" y2="126.6" stroke="#aaa" stroke-width=".8" opacity=".7"/><line x1="14" x2="19" y1="130.1" y2="130.1" stroke="#aaa" stroke-width=".8" opacity=".7"/><line x1="13" x2="24" y1="133.7" y2="133.7" stroke="#20a8b8" stroke-width="2"/><line x1="14" x2="19" y1="137.2" y2="137.2" stroke="#aaa" stroke-width=".8" opacity=".7"/><line x1="14" x2="19" y1="140.7" y2="140.7" stroke="#aaa" stroke-width=".8" opacity=".7"/><line x1="14" x2="19" y1="144.2" y2="144.2" stroke="#aaa" stroke-width=".8" opacity=".7"/><line x1="14" x2="19" y1="147.8" y2="147.8" stroke="#aaa" stroke-width=".8" opacity=".7"/><line x1="13" x2="24" y1="151.3" y2="151.3" stroke="#20a8b8" stroke-width="2"/><line x1="14" x2="19" y1="154.8" y2="154.8" stroke="#aaa" stroke-width=".8" opacity=".7"/><line x1="14" x2="19" y1="158.3" y2="158.3" stroke="#aaa" stroke-width=".8" opacity=".7"/><line x1="14" x2="19" y1="161.8" y2="161.8" stroke="#aaa" stroke-width=".8" opacity=".7"/><line x1="14" x2="19" y1="165.4" y2="165.4" stroke="#aaa" stroke-width=".8" opacity=".7"/><line x1="13" x2="24" y1="168.9" y2="168.9" stroke="#20a8b8" stroke-width="2"/><line x1="14" x2="19" y1="172.4" y2="172.4" stroke="#aaa" stroke-width=".8" opacity=".7"/><line x1="14" x2="19" y1="175.9" y2="175.9" stroke="#aaa" stroke-width=".8" opacity=".7"/><line x1="14" x2="19" y1="179.5" y2="179.5" stroke="#aaa" stroke-width=".8" opacity=".7"/><line x1="14" x2="19" y1="183.0" y2="183.0" stroke="#aaa" stroke-width=".8" opacity=".7"/><line x1="13" x2="24" y1="186.5" y2="186.5" stroke="#20a8b8" stroke-width="2"/><line x1="14" x2="14" y1="10.399999999999977" y2="186.5" stroke="#aaa" stroke-width=".8"/><text x="26" y="14.4" font-size="11.5" fill="#d8d0c8" font-family="Liberation Sans">100</text><text x="26" y="32.0" font-size="11.5" fill="#d8d0c8" font-family="Liberation Sans">90</text><text x="26" y="49.6" font-size="11.5" fill="#d8d0c8" font-family="Liberation Sans">80</text><text x="26" y="67.2" font-size="11.5" fill="#d8d0c8" font-family="Liberation Sans">70</text><text x="26" y="84.8" font-size="11.5" fill="#d8d0c8" font-family="Liberation Sans">60</text><text x="26" y="102.4" font-size="11.5" fill="#d8d0c8" font-family="Liberation Sans">50</text><text x="26" y="120.1" font-size="11.5" fill="#d8d0c8" font-family="Liberation Sans">40</text><text x="26" y="137.7" font-size="11.5" fill="#d8d0c8" font-family="Liberation Sans">30</text><text x="26" y="155.3" font-size="11.5" fill="#d8d0c8" font-family="Liberation Sans">20</text><text x="26" y="172.9" font-size="11.5" fill="#d8d0c8" font-family="Liberation Sans">10</text><text x="26" y="190.5" font-size="11.5" fill="#d8d0c8" font-family="Liberation Sans">0</text><path d="M20 9 L46 7.5 L46 12.5 L20 11Z" fill="#f0e060"/></svg>
<div class="a lbl" style="left:1267px;top:559px;width:120px;text-align:center;font-size:11px;line-height:14px;color:#eaeaea;text-shadow:1px 1px 1px #333">PRECIPITATION<br>DIFF</div>
<div class="a" style="left:1303px;top:591px;width:48px;height:198px;background:linear-gradient(90deg,#050505,#0e0e0e 25%,#2a2a2a 55%,#4c4c4c 90%,#b8b0a8 96%,#5a5a5a);box-shadow:0 0 2px #333"></div>
<svg class="a" style="left:1303px;top:591px" width="50" height="198"><line x1="13" x2="24" y1="10.4" y2="10.4" stroke="#20a8b8" stroke-width="2"/><line x1="14" x2="19" y1="13.9" y2="13.9" stroke="#aaa" stroke-width=".8" opacity=".7"/><line x1="14" x2="19" y1="17.4" y2="17.4" stroke="#aaa" stroke-width=".8" opacity=".7"/><line x1="14" x2="19" y1="21.0" y2="21.0" stroke="#aaa" stroke-width=".8" opacity=".7"/><line x1="14" x2="19" y1="24.5" y2="24.5" stroke="#aaa" stroke-width=".8" opacity=".7"/><line x1="13" x2="24" y1="28.0" y2="28.0" stroke="#20a8b8" stroke-width="2"/><line x1="14" x2="19" y1="31.5" y2="31.5" stroke="#aaa" stroke-width=".8" opacity=".7"/><line x1="14" x2="19" y1="35.1" y2="35.1" stroke="#aaa" stroke-width=".8" opacity=".7"/><line x1="14" x2="19" y1="38.6" y2="38.6" stroke="#aaa" stroke-width=".8" opacity=".7"/><line x1="14" x2="19" y1="42.1" y2="42.1" stroke="#aaa" stroke-width=".8" opacity=".7"/><line x1="13" x2="24" y1="45.6" y2="45.6" stroke="#20a8b8" stroke-width="2"/><line x1="14" x2="19" y1="49.1" y2="49.1" stroke="#aaa" stroke-width=".8" opacity=".7"/><line x1="14" x2="19" y1="52.7" y2="52.7" stroke="#aaa" stroke-width=".8" opacity=".7"/><line x1="14" x2="19" y1="56.2" y2="56.2" stroke="#aaa" stroke-width=".8" opacity=".7"/><line x1="14" x2="19" y1="59.7" y2="59.7" stroke="#aaa" stroke-width=".8" opacity=".7"/><line x1="13" x2="24" y1="63.2" y2="63.2" stroke="#20a8b8" stroke-width="2"/><line x1="14" x2="19" y1="66.8" y2="66.8" stroke="#aaa" stroke-width=".8" opacity=".7"/><line x1="14" x2="19" y1="70.3" y2="70.3" stroke="#aaa" stroke-width=".8" opacity=".7"/><line x1="14" x2="19" y1="73.8" y2="73.8" stroke="#aaa" stroke-width=".8" opacity=".7"/><line x1="14" x2="19" y1="77.3" y2="77.3" stroke="#aaa" stroke-width=".8" opacity=".7"/><line x1="13" x2="24" y1="80.8" y2="80.8" stroke="#20a8b8" stroke-width="2"/><line x1="14" x2="19" y1="84.4" y2="84.4" stroke="#aaa" stroke-width=".8" opacity=".7"/><line x1="14" x2="19" y1="87.9" y2="87.9" stroke="#aaa" stroke-width=".8" opacity=".7"/><line x1="14" x2="19" y1="91.4" y2="91.4" stroke="#aaa" stroke-width=".8" opacity=".7"/><line x1="14" x2="19" y1="94.9" y2="94.9" stroke="#aaa" stroke-width=".8" opacity=".7"/><line x1="13" x2="24" y1="98.4" y2="98.4" stroke="#20a8b8" stroke-width="2"/><line x1="14" x2="19" y1="102.0" y2="102.0" stroke="#aaa" stroke-width=".8" opacity=".7"/><line x1="14" x2="19" y1="105.5" y2="105.5" stroke="#aaa" stroke-width=".8" opacity=".7"/><line x1="14" x2="19" y1="109.0" y2="109.0" stroke="#aaa" stroke-width=".8" opacity=".7"/><line x1="14" x2="19" y1="112.5" y2="112.5" stroke="#aaa" stroke-width=".8" opacity=".7"/><line x1="13" x2="24" y1="116.1" y2="116.1" stroke="#20a8b8" stroke-width="2"/><line x1="14" x2="19" y1="119.6" y2="119.6" stroke="#aaa" stroke-width=".8" opacity=".7"/><line x1="14" x2="19" y1="123.1" y2="123.1" stroke="#aaa" stroke-width=".8" opacity=".7"/><line x1="14" x2="19" y1="126.6" y2="126.6" stroke="#aaa" stroke-width=".8" opacity=".7"/><line x1="14" x2="19" y1="130.1" y2="130.1" stroke="#aaa" stroke-width=".8" opacity=".7"/><line x1="13" x2="24" y1="133.7" y2="133.7" stroke="#20a8b8" stroke-width="2"/><line x1="14" x2="19" y1="137.2" y2="137.2" stroke="#aaa" stroke-width=".8" opacity=".7"/><line x1="14" x2="19" y1="140.7" y2="140.7" stroke="#aaa" stroke-width=".8" opacity=".7"/><line x1="14" x2="19" y1="144.2" y2="144.2" stroke="#aaa" stroke-width=".8" opacity=".7"/><line x1="14" x2="19" y1="147.8" y2="147.8" stroke="#aaa" stroke-width=".8" opacity=".7"/><line x1="13" x2="24" y1="151.3" y2="151.3" stroke="#20a8b8" stroke-width="2"/><line x1="14" x2="19" y1="154.8" y2="154.8" stroke="#aaa" stroke-width=".8" opacity=".7"/><line x1="14" x2="19" y1="158.3" y2="158.3" stroke="#aaa" stroke-width=".8" opacity=".7"/><line x1="14" x2="19" y1="161.8" y2="161.8" stroke="#aaa" stroke-width=".8" opacity=".7"/><line x1="14" x2="19" y1="165.4" y2="165.4" stroke="#aaa" stroke-width=".8" opacity=".7"/><line x1="13" x2="24" y1="168.9" y2="168.9" stroke="#20a8b8" stroke-width="2"/><line x1="14" x2="19" y1="172.4" y2="172.4" stroke="#aaa" stroke-width=".8" opacity=".7"/><line x1="14" x2="19" y1="175.9" y2="175.9" stroke="#aaa" stroke-width=".8" opacity=".7"/><line x1="14" x2="19" y1="179.5" y2="179.5" stroke="#aaa" stroke-width=".8" opacity=".7"/><line x1="14" x2="19" y1="183.0" y2="183.0" stroke="#aaa" stroke-width=".8" opacity=".7"/><line x1="13" x2="24" y1="186.5" y2="186.5" stroke="#20a8b8" stroke-width="2"/><line x1="14" x2="14" y1="10.399999999999977" y2="186.5" stroke="#aaa" stroke-width=".8"/><text x="26" y="14.4" font-size="11.5" fill="#d8d0c8" font-family="Liberation Sans">20</text><text x="26" y="32.0" font-size="11.5" fill="#d8d0c8" font-family="Liberation Sans">18</text><text x="26" y="49.6" font-size="11.5" fill="#d8d0c8" font-family="Liberation Sans">16</text><text x="26" y="67.2" font-size="11.5" fill="#d8d0c8" font-family="Liberation Sans">14</text><text x="26" y="84.8" font-size="11.5" fill="#d8d0c8" font-family="Liberation Sans">12</text><text x="26" y="102.4" font-size="11.5" fill="#d8d0c8" font-family="Liberation Sans">10</text><text x="26" y="120.1" font-size="11.5" fill="#d8d0c8" font-family="Liberation Sans">8</text><text x="26" y="137.7" font-size="11.5" fill="#d8d0c8" font-family="Liberation Sans">6</text><text x="26" y="155.3" font-size="11.5" fill="#d8d0c8" font-family="Liberation Sans">4</text><text x="26" y="172.9" font-size="11.5" fill="#d8d0c8" font-family="Liberation Sans">2</text><text x="26" y="190.5" font-size="11.5" fill="#d8d0c8" font-family="Liberation Sans">0</text><path d="M20 52 L46 50.5 L46 55.5 L20 54Z" fill="#f0e060"/></svg>
<div class="a lbl" style="left:1376px;top:559px;width:120px;text-align:center;font-size:11px;line-height:14px;color:#eaeaea;text-shadow:1px 1px 1px #333">PRECIPITATION<br>INTENSITY</div>
<div class="a" style="left:1410px;top:591px;width:48px;height:198px;background:linear-gradient(90deg,#050505,#0e0e0e 25%,#2a2a2a 55%,#4c4c4c 90%,#b8b0a8 96%,#5a5a5a);box-shadow:0 0 2px #333"></div>
<svg class="a" style="left:1410px;top:591px" width="50" height="198"><line x1="13" x2="24" y1="10.4" y2="10.4" stroke="#20a8b8" stroke-width="2"/><line x1="14" x2="19" y1="13.9" y2="13.9" stroke="#aaa" stroke-width=".8" opacity=".7"/><line x1="14" x2="19" y1="17.4" y2="17.4" stroke="#aaa" stroke-width=".8" opacity=".7"/><line x1="14" x2="19" y1="21.0" y2="21.0" stroke="#aaa" stroke-width=".8" opacity=".7"/><line x1="14" x2="19" y1="24.5" y2="24.5" stroke="#aaa" stroke-width=".8" opacity=".7"/><line x1="13" x2="24" y1="28.0" y2="28.0" stroke="#20a8b8" stroke-width="2"/><line x1="14" x2="19" y1="31.5" y2="31.5" stroke="#aaa" stroke-width=".8" opacity=".7"/><line x1="14" x2="19" y1="35.1" y2="35.1" stroke="#aaa" stroke-width=".8" opacity=".7"/><line x1="14" x2="19" y1="38.6" y2="38.6" stroke="#aaa" stroke-width=".8" opacity=".7"/><line x1="14" x2="19" y1="42.1" y2="42.1" stroke="#aaa" stroke-width=".8" opacity=".7"/><line x1="13" x2="24" y1="45.6" y2="45.6" stroke="#20a8b8" stroke-width="2"/><line x1="14" x2="19" y1="49.1" y2="49.1" stroke="#aaa" stroke-width=".8" opacity=".7"/><line x1="14" x2="19" y1="52.7" y2="52.7" stroke="#aaa" stroke-width=".8" opacity=".7"/><line x1="14" x2="19" y1="56.2" y2="56.2" stroke="#aaa" stroke-width=".8" opacity=".7"/><line x1="14" x2="19" y1="59.7" y2="59.7" stroke="#aaa" stroke-width=".8" opacity=".7"/><line x1="13" x2="24" y1="63.2" y2="63.2" stroke="#20a8b8" stroke-width="2"/><line x1="14" x2="19" y1="66.8" y2="66.8" stroke="#aaa" stroke-width=".8" opacity=".7"/><line x1="14" x2="19" y1="70.3" y2="70.3" stroke="#aaa" stroke-width=".8" opacity=".7"/><line x1="14" x2="19" y1="73.8" y2="73.8" stroke="#aaa" stroke-width=".8" opacity=".7"/><line x1="14" x2="19" y1="77.3" y2="77.3" stroke="#aaa" stroke-width=".8" opacity=".7"/><line x1="13" x2="24" y1="80.8" y2="80.8" stroke="#20a8b8" stroke-width="2"/><line x1="14" x2="19" y1="84.4" y2="84.4" stroke="#aaa" stroke-width=".8" opacity=".7"/><line x1="14" x2="19" y1="87.9" y2="87.9" stroke="#aaa" stroke-width=".8" opacity=".7"/><line x1="14" x2="19" y1="91.4" y2="91.4" stroke="#aaa" stroke-width=".8" opacity=".7"/><line x1="14" x2="19" y1="94.9" y2="94.9" stroke="#aaa" stroke-width=".8" opacity=".7"/><line x1="13" x2="24" y1="98.4" y2="98.4" stroke="#20a8b8" stroke-width="2"/><line x1="14" x2="19" y1="102.0" y2="102.0" stroke="#aaa" stroke-width=".8" opacity=".7"/><line x1="14" x2="19" y1="105.5" y2="105.5" stroke="#aaa" stroke-width=".8" opacity=".7"/><line x1="14" x2="19" y1="109.0" y2="109.0" stroke="#aaa" stroke-width=".8" opacity=".7"/><line x1="14" x2="19" y1="112.5" y2="112.5" stroke="#aaa" stroke-width=".8" opacity=".7"/><line x1="13" x2="24" y1="116.1" y2="116.1" stroke="#20a8b8" stroke-width="2"/><line x1="14" x2="19" y1="119.6" y2="119.6" stroke="#aaa" stroke-width=".8" opacity=".7"/><line x1="14" x2="19" y1="123.1" y2="123.1" stroke="#aaa" stroke-width=".8" opacity=".7"/><line x1="14" x2="19" y1="126.6" y2="126.6" stroke="#aaa" stroke-width=".8" opacity=".7"/><line x1="14" x2="19" y1="130.1" y2="130.1" stroke="#aaa" stroke-width=".8" opacity=".7"/><line x1="13" x2="24" y1="133.7" y2="133.7" stroke="#20a8b8" stroke-width="2"/><line x1="14" x2="19" y1="137.2" y2="137.2" stroke="#aaa" stroke-width=".8" opacity=".7"/><line x1="14" x2="19" y1="140.7" y2="140.7" stroke="#aaa" stroke-width=".8" opacity=".7"/><line x1="14" x2="19" y1="144.2" y2="144.2" stroke="#aaa" stroke-width=".8" opacity=".7"/><line x1="14" x2="19" y1="147.8" y2="147.8" stroke="#aaa" stroke-width=".8" opacity=".7"/><line x1="13" x2="24" y1="151.3" y2="151.3" stroke="#20a8b8" stroke-width="2"/><line x1="14" x2="19" y1="154.8" y2="154.8" stroke="#aaa" stroke-width=".8" opacity=".7"/><line x1="14" x2="19" y1="158.3" y2="158.3" stroke="#aaa" stroke-width=".8" opacity=".7"/><line x1="14" x2="19" y1="161.8" y2="161.8" stroke="#aaa" stroke-width=".8" opacity=".7"/><line x1="14" x2="19" y1="165.4" y2="165.4" stroke="#aaa" stroke-width=".8" opacity=".7"/><line x1="13" x2="24" y1="168.9" y2="168.9" stroke="#20a8b8" stroke-width="2"/><line x1="14" x2="19" y1="172.4" y2="172.4" stroke="#aaa" stroke-width=".8" opacity=".7"/><line x1="14" x2="19" y1="175.9" y2="175.9" stroke="#aaa" stroke-width=".8" opacity=".7"/><line x1="14" x2="19" y1="179.5" y2="179.5" stroke="#aaa" stroke-width=".8" opacity=".7"/><line x1="14" x2="19" y1="183.0" y2="183.0" stroke="#aaa" stroke-width=".8" opacity=".7"/><line x1="13" x2="24" y1="186.5" y2="186.5" stroke="#20a8b8" stroke-width="2"/><line x1="14" x2="14" y1="10.399999999999977" y2="186.5" stroke="#aaa" stroke-width=".8"/><text x="26" y="14.4" font-size="11.5" fill="#d8d0c8" font-family="Liberation Sans">50</text><text x="26" y="32.0" font-size="11.5" fill="#d8d0c8" font-family="Liberation Sans">45</text><text x="26" y="49.6" font-size="11.5" fill="#d8d0c8" font-family="Liberation Sans">40</text><text x="26" y="67.2" font-size="11.5" fill="#d8d0c8" font-family="Liberation Sans">35</text><text x="26" y="84.8" font-size="11.5" fill="#d8d0c8" font-family="Liberation Sans">30</text><text x="26" y="102.4" font-size="11.5" fill="#d8d0c8" font-family="Liberation Sans">25</text><text x="26" y="120.1" font-size="11.5" fill="#d8d0c8" font-family="Liberation Sans">20</text><text x="26" y="137.7" font-size="11.5" fill="#d8d0c8" font-family="Liberation Sans">15</text><text x="26" y="155.3" font-size="11.5" fill="#d8d0c8" font-family="Liberation Sans">10</text><text x="26" y="172.9" font-size="11.5" fill="#d8d0c8" font-family="Liberation Sans">5</text><text x="26" y="190.5" font-size="11.5" fill="#d8d0c8" font-family="Liberation Sans">0</text><path d="M20 61 L46 59.5 L46 64.5 L20 63Z" fill="#f0e060"/></svg>
<svg class="a" style="left:1150px;top:900px" width="400" height="100"><defs><filter id="gb2" x="-30%" y="-200%" width="160%" height="500%"><feGaussianBlur stdDeviation="14 8"/></filter></defs><ellipse cx="207" cy="52" rx="135" ry="12" fill="#e2f6fc" filter="url(#gb2)"/><ellipse cx="207" cy="52" rx="100" ry="6" fill="#eaf9fe" filter="url(#gb2)"/></svg>
<div class="a" style="left:1266px;top:942px;font-size:17.5px;font-weight:bold;color:#111;white-space:nowrap;letter-spacing:0.05px">5/14/2019&nbsp;&nbsp; 10:00:37 PM</div>
<div class="a" style="left:16px;top:1004px;width:18px;height:18px;border-radius:50%;background:#4ed21a"></div>
<div class="a" style="left:50px;top:1005px;font-size:14px;color:#f0f0f0">localhost,23600</div>
<div class="a" style="left:260px;top:1006px;font-size:14px;color:#f0f0f0">133 Items, 0.03 Seconds</div>
<div class="a" style="left:1403px;top:1001px;width:25px;height:25px;background:#fff"></div>
<div class="a" style="left:1452px;top:1005px;font-size:16px;font-style:italic;color:#ececec;letter-spacing:-0.2px">10:00:37 PM</div>
</div>
</body></html>
